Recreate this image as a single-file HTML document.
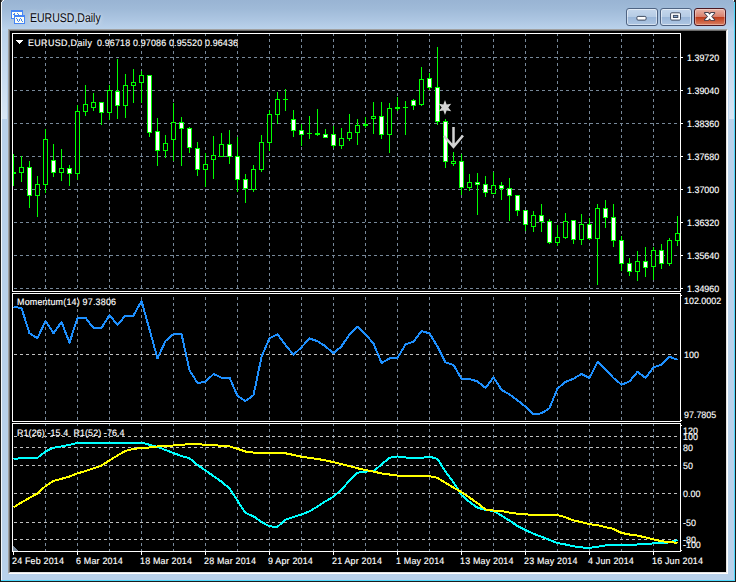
<!DOCTYPE html>
<html><head><meta charset="utf-8"><title>EURUSD,Daily</title>
<style>
html,body{margin:0;padding:0;}
body{width:738px;height:582px;overflow:hidden;background:#fff;font-family:"Liberation Sans",sans-serif;position:relative;}
#win{position:absolute;left:0;top:0;width:736px;height:582px;background:#b9d1ea;overflow:hidden;}
#cap{position:absolute;left:0;top:0;width:736px;height:31px;background:linear-gradient(#99b4d3 0px,#9fbad8 9px,#adc6e2 20px,#bbd3ec 30px);}
#bl{position:absolute;left:0;top:0;width:1px;height:582px;background:#1c1c1c;}
#bl2{position:absolute;left:1px;top:2px;width:1px;height:579px;background:#f4f8fc;}
#br{position:absolute;left:735px;top:0;width:1px;height:582px;background:#1c1c1c;}
#br2{position:absolute;left:734px;top:2px;width:1px;height:578px;background:#4fd8fc;}
#bb{position:absolute;left:0;top:581px;width:736px;height:1px;background:#1c1c1c;}
#bb2{position:absolute;left:1px;top:580px;width:734px;height:1px;background:#4fd8fc;}
#client{position:absolute;left:8px;top:29px;width:720px;height:545px;background:#000;box-sizing:border-box;border-top:1px solid #a0a0a0;border-left:1px solid #a0a0a0;border-right:1px solid #fff;border-bottom:1px solid #fff;}
#client2{position:absolute;left:9px;top:30px;width:718px;height:543px;background:#000;box-sizing:border-box;border-top:1px solid #696969;border-left:1px solid #696969;border-right:1px solid #e3e3e3;border-bottom:1px solid #e3e3e3;}
.hl{position:absolute;top:26px;height:93px;width:5px;background:linear-gradient(rgba(255,255,255,0),rgba(255,255,255,.44));}
svg{position:absolute;left:0;top:0;}
.l{position:absolute;color:#fff;font-size:9.4px;line-height:11px;white-space:pre;letter-spacing:.1px;text-rendering:geometricPrecision;transform:scaleX(.95);-webkit-text-stroke:.15px #fff;transform-origin:0 50%;}
#title{position:absolute;left:30.3px;top:9.6px;font-size:12.6px;line-height:16px;color:#0a0a10;white-space:pre;text-rendering:geometricPrecision;transform:scaleX(.835);transform-origin:0 0;text-shadow:0 0 3px rgba(255,255,255,.6),0 0 6px rgba(255,255,255,.5),0 0 10px rgba(255,255,255,.4);}
.btn{position:absolute;top:8px;height:18px;width:32px;box-sizing:border-box;border:1px solid #4f6483;border-radius:3px;box-shadow:inset 0 0 0 1px rgba(255,255,255,.5);background:linear-gradient(#c5d7ec 0,#b6cce5 47%,#9bb7d9 53%,#afc7e3 100%);}
#bc{width:32px;border-color:#4a1822;background:linear-gradient(#e9b3a6 0,#d9826f 47%,#bf3d1c 53%,#d97f62 100%);box-shadow:inset 0 0 0 1px rgba(255,255,255,.35);}
</style></head><body>
<div id="win">
<div id="cap"></div>
<div class="hl" style="left:2px"></div><div class="hl" style="left:729px"></div>
<div id="bl"></div><div id="bl2"></div><div id="br2"></div><div id="br"></div><div id="bb2"></div><div id="bb"></div>
<div id="title">EURUSD,Daily</div>
<div class="btn" style="left:626px"></div>
<div class="btn" style="left:660px"></div>
<div class="btn" id="bc" style="left:694px"></div>
<svg width="738" height="31" viewBox="0 0 738 31" shape-rendering="crispEdges">
<path d="M1 0h1v2h-1z" fill="#4a4a4a"/><path d="M2 0h1v1h-1z" fill="#8f99a6"/><path d="M2 1h1v1h-1zM3 0h1v1h-1zM733 0h1v1h-1z" fill="#f0f6fb"/><path d="M734 0h1v2h-1z" fill="#2a2a2a"/>
<rect x="11" y="10" width="12" height="9" fill="#4685f5"/>
<rect x="12" y="12" width="10" height="6" fill="#fffff2"/>
<path d="M13 14h2v1h-2zM14 13h1v1h-1zM17 13h1v1h-1zM18 14h1v1h-1z" fill="#4685f5"/>
<rect x="14" y="15" width="11" height="9" fill="#4685f5"/>
<rect x="15" y="17" width="9" height="6" fill="#fffff2"/>
<path d="M16 18h1v1h-1zM17 19h1v1h-1zM17 20h1v1h-1zM18 21h1v1h-1zM19 20h1v1h-1zM19 19h1v1h-1zM20 18h1v1h-1zM21 19h1v1h-1zM21 20h1v1h-1zM22 21h1v1h-1z" fill="#4685f5"/>
<g shape-rendering="geometricPrecision">
<rect x="636.9" y="16.4" width="9.2" height="3.7" rx="1.2" fill="#fff" stroke="#3f4b60" stroke-width="1"/>
<rect x="670.6" y="12.8" width="9.9" height="7.3" rx="1.2" fill="#fff" stroke="#3f4b60" stroke-width="1"/>
<rect x="673.4" y="15.4" width="4.4" height="2.1" fill="#86a5cc" stroke="#3f4b60" stroke-width="1"/>
<path d="M704.9 12.9H708.1L714.3 19.9H711.1ZM711.1 12.9H714.3L708.1 19.9H704.9Z" fill="#43414f" stroke="#43414f" stroke-width="1.9" stroke-linejoin="round"/>
<path d="M704.9 12.9H708.1L714.3 19.9H711.1ZM711.1 12.9H714.3L708.1 19.9H704.9Z" fill="#fff"/>
</g>
</svg>
<div id="client"></div><div id="client2"></div>
<svg width="738" height="582" viewBox="0 0 738 582" shape-rendering="crispEdges">
<defs>
<clipPath id="cm"><rect x="13" y="34" width="667" height="257"/></clipPath>
<clipPath id="c2"><rect x="13" y="294" width="667" height="127"/></clipPath>
<clipPath id="c3"><rect x="13" y="424" width="667" height="127"/></clipPath>
</defs>
<path d="M45 34h1v2h-1zM45 39h1v3h-1zM45 45h1v3h-1zM45 51h1v3h-1zM45 57h1v3h-1zM45 63h1v3h-1zM45 69h1v3h-1zM45 75h1v3h-1zM45 81h1v3h-1zM45 87h1v3h-1zM45 93h1v3h-1zM45 99h1v3h-1zM45 105h1v3h-1zM45 111h1v3h-1zM45 117h1v3h-1zM45 123h1v3h-1zM45 129h1v3h-1zM45 135h1v3h-1zM45 141h1v3h-1zM45 147h1v3h-1zM45 153h1v3h-1zM45 159h1v3h-1zM45 165h1v3h-1zM45 171h1v3h-1zM45 177h1v3h-1zM45 183h1v3h-1zM45 189h1v3h-1zM45 195h1v3h-1zM45 201h1v3h-1zM45 207h1v3h-1zM45 213h1v3h-1zM45 219h1v3h-1zM45 225h1v3h-1zM45 231h1v3h-1zM45 237h1v3h-1zM45 243h1v3h-1zM45 249h1v3h-1zM45 255h1v3h-1zM45 261h1v3h-1zM45 267h1v3h-1zM45 273h1v3h-1zM45 279h1v3h-1zM45 285h1v3h-1zM45 297h1v3h-1zM45 303h1v3h-1zM45 309h1v3h-1zM45 315h1v3h-1zM45 321h1v3h-1zM45 327h1v3h-1zM45 333h1v3h-1zM45 339h1v3h-1zM45 345h1v3h-1zM45 351h1v3h-1zM45 357h1v3h-1zM45 363h1v3h-1zM45 369h1v3h-1zM45 375h1v3h-1zM45 381h1v3h-1zM45 387h1v3h-1zM45 393h1v3h-1zM45 399h1v3h-1zM45 405h1v3h-1zM45 411h1v3h-1zM45 417h1v3h-1zM45 424h1v2h-1zM45 429h1v3h-1zM45 435h1v3h-1zM45 441h1v3h-1zM45 447h1v3h-1zM45 453h1v3h-1zM45 459h1v3h-1zM45 465h1v3h-1zM45 471h1v3h-1zM45 477h1v3h-1zM45 483h1v3h-1zM45 489h1v3h-1zM45 495h1v3h-1zM45 501h1v3h-1zM45 507h1v3h-1zM45 513h1v3h-1zM45 519h1v3h-1zM45 525h1v3h-1zM45 531h1v3h-1zM45 537h1v3h-1zM45 543h1v3h-1zM45 549h1v2h-1zM77 34h1v2h-1zM77 39h1v3h-1zM77 45h1v3h-1zM77 51h1v3h-1zM77 57h1v3h-1zM77 63h1v3h-1zM77 69h1v3h-1zM77 75h1v3h-1zM77 81h1v3h-1zM77 87h1v3h-1zM77 93h1v3h-1zM77 99h1v3h-1zM77 105h1v3h-1zM77 111h1v3h-1zM77 117h1v3h-1zM77 123h1v3h-1zM77 129h1v3h-1zM77 135h1v3h-1zM77 141h1v3h-1zM77 147h1v3h-1zM77 153h1v3h-1zM77 159h1v3h-1zM77 165h1v3h-1zM77 171h1v3h-1zM77 177h1v3h-1zM77 183h1v3h-1zM77 189h1v3h-1zM77 195h1v3h-1zM77 201h1v3h-1zM77 207h1v3h-1zM77 213h1v3h-1zM77 219h1v3h-1zM77 225h1v3h-1zM77 231h1v3h-1zM77 237h1v3h-1zM77 243h1v3h-1zM77 249h1v3h-1zM77 255h1v3h-1zM77 261h1v3h-1zM77 267h1v3h-1zM77 273h1v3h-1zM77 279h1v3h-1zM77 285h1v3h-1zM77 297h1v3h-1zM77 303h1v3h-1zM77 309h1v3h-1zM77 315h1v3h-1zM77 321h1v3h-1zM77 327h1v3h-1zM77 333h1v3h-1zM77 339h1v3h-1zM77 345h1v3h-1zM77 351h1v3h-1zM77 357h1v3h-1zM77 363h1v3h-1zM77 369h1v3h-1zM77 375h1v3h-1zM77 381h1v3h-1zM77 387h1v3h-1zM77 393h1v3h-1zM77 399h1v3h-1zM77 405h1v3h-1zM77 411h1v3h-1zM77 417h1v3h-1zM77 424h1v2h-1zM77 429h1v3h-1zM77 435h1v3h-1zM77 441h1v3h-1zM77 447h1v3h-1zM77 453h1v3h-1zM77 459h1v3h-1zM77 465h1v3h-1zM77 471h1v3h-1zM77 477h1v3h-1zM77 483h1v3h-1zM77 489h1v3h-1zM77 495h1v3h-1zM77 501h1v3h-1zM77 507h1v3h-1zM77 513h1v3h-1zM77 519h1v3h-1zM77 525h1v3h-1zM77 531h1v3h-1zM77 537h1v3h-1zM77 543h1v3h-1zM77 549h1v2h-1zM109 34h1v2h-1zM109 39h1v3h-1zM109 45h1v3h-1zM109 51h1v3h-1zM109 57h1v3h-1zM109 63h1v3h-1zM109 69h1v3h-1zM109 75h1v3h-1zM109 81h1v3h-1zM109 87h1v3h-1zM109 93h1v3h-1zM109 99h1v3h-1zM109 105h1v3h-1zM109 111h1v3h-1zM109 117h1v3h-1zM109 123h1v3h-1zM109 129h1v3h-1zM109 135h1v3h-1zM109 141h1v3h-1zM109 147h1v3h-1zM109 153h1v3h-1zM109 159h1v3h-1zM109 165h1v3h-1zM109 171h1v3h-1zM109 177h1v3h-1zM109 183h1v3h-1zM109 189h1v3h-1zM109 195h1v3h-1zM109 201h1v3h-1zM109 207h1v3h-1zM109 213h1v3h-1zM109 219h1v3h-1zM109 225h1v3h-1zM109 231h1v3h-1zM109 237h1v3h-1zM109 243h1v3h-1zM109 249h1v3h-1zM109 255h1v3h-1zM109 261h1v3h-1zM109 267h1v3h-1zM109 273h1v3h-1zM109 279h1v3h-1zM109 285h1v3h-1zM109 297h1v3h-1zM109 303h1v3h-1zM109 309h1v3h-1zM109 315h1v3h-1zM109 321h1v3h-1zM109 327h1v3h-1zM109 333h1v3h-1zM109 339h1v3h-1zM109 345h1v3h-1zM109 351h1v3h-1zM109 357h1v3h-1zM109 363h1v3h-1zM109 369h1v3h-1zM109 375h1v3h-1zM109 381h1v3h-1zM109 387h1v3h-1zM109 393h1v3h-1zM109 399h1v3h-1zM109 405h1v3h-1zM109 411h1v3h-1zM109 417h1v3h-1zM109 424h1v2h-1zM109 429h1v3h-1zM109 435h1v3h-1zM109 441h1v3h-1zM109 447h1v3h-1zM109 453h1v3h-1zM109 459h1v3h-1zM109 465h1v3h-1zM109 471h1v3h-1zM109 477h1v3h-1zM109 483h1v3h-1zM109 489h1v3h-1zM109 495h1v3h-1zM109 501h1v3h-1zM109 507h1v3h-1zM109 513h1v3h-1zM109 519h1v3h-1zM109 525h1v3h-1zM109 531h1v3h-1zM109 537h1v3h-1zM109 543h1v3h-1zM109 549h1v2h-1zM141 34h1v2h-1zM141 39h1v3h-1zM141 45h1v3h-1zM141 51h1v3h-1zM141 57h1v3h-1zM141 63h1v3h-1zM141 69h1v3h-1zM141 75h1v3h-1zM141 81h1v3h-1zM141 87h1v3h-1zM141 93h1v3h-1zM141 99h1v3h-1zM141 105h1v3h-1zM141 111h1v3h-1zM141 117h1v3h-1zM141 123h1v3h-1zM141 129h1v3h-1zM141 135h1v3h-1zM141 141h1v3h-1zM141 147h1v3h-1zM141 153h1v3h-1zM141 159h1v3h-1zM141 165h1v3h-1zM141 171h1v3h-1zM141 177h1v3h-1zM141 183h1v3h-1zM141 189h1v3h-1zM141 195h1v3h-1zM141 201h1v3h-1zM141 207h1v3h-1zM141 213h1v3h-1zM141 219h1v3h-1zM141 225h1v3h-1zM141 231h1v3h-1zM141 237h1v3h-1zM141 243h1v3h-1zM141 249h1v3h-1zM141 255h1v3h-1zM141 261h1v3h-1zM141 267h1v3h-1zM141 273h1v3h-1zM141 279h1v3h-1zM141 285h1v3h-1zM141 297h1v3h-1zM141 303h1v3h-1zM141 309h1v3h-1zM141 315h1v3h-1zM141 321h1v3h-1zM141 327h1v3h-1zM141 333h1v3h-1zM141 339h1v3h-1zM141 345h1v3h-1zM141 351h1v3h-1zM141 357h1v3h-1zM141 363h1v3h-1zM141 369h1v3h-1zM141 375h1v3h-1zM141 381h1v3h-1zM141 387h1v3h-1zM141 393h1v3h-1zM141 399h1v3h-1zM141 405h1v3h-1zM141 411h1v3h-1zM141 417h1v3h-1zM141 424h1v2h-1zM141 429h1v3h-1zM141 435h1v3h-1zM141 441h1v3h-1zM141 447h1v3h-1zM141 453h1v3h-1zM141 459h1v3h-1zM141 465h1v3h-1zM141 471h1v3h-1zM141 477h1v3h-1zM141 483h1v3h-1zM141 489h1v3h-1zM141 495h1v3h-1zM141 501h1v3h-1zM141 507h1v3h-1zM141 513h1v3h-1zM141 519h1v3h-1zM141 525h1v3h-1zM141 531h1v3h-1zM141 537h1v3h-1zM141 543h1v3h-1zM141 549h1v2h-1zM173 34h1v2h-1zM173 39h1v3h-1zM173 45h1v3h-1zM173 51h1v3h-1zM173 57h1v3h-1zM173 63h1v3h-1zM173 69h1v3h-1zM173 75h1v3h-1zM173 81h1v3h-1zM173 87h1v3h-1zM173 93h1v3h-1zM173 99h1v3h-1zM173 105h1v3h-1zM173 111h1v3h-1zM173 117h1v3h-1zM173 123h1v3h-1zM173 129h1v3h-1zM173 135h1v3h-1zM173 141h1v3h-1zM173 147h1v3h-1zM173 153h1v3h-1zM173 159h1v3h-1zM173 165h1v3h-1zM173 171h1v3h-1zM173 177h1v3h-1zM173 183h1v3h-1zM173 189h1v3h-1zM173 195h1v3h-1zM173 201h1v3h-1zM173 207h1v3h-1zM173 213h1v3h-1zM173 219h1v3h-1zM173 225h1v3h-1zM173 231h1v3h-1zM173 237h1v3h-1zM173 243h1v3h-1zM173 249h1v3h-1zM173 255h1v3h-1zM173 261h1v3h-1zM173 267h1v3h-1zM173 273h1v3h-1zM173 279h1v3h-1zM173 285h1v3h-1zM173 297h1v3h-1zM173 303h1v3h-1zM173 309h1v3h-1zM173 315h1v3h-1zM173 321h1v3h-1zM173 327h1v3h-1zM173 333h1v3h-1zM173 339h1v3h-1zM173 345h1v3h-1zM173 351h1v3h-1zM173 357h1v3h-1zM173 363h1v3h-1zM173 369h1v3h-1zM173 375h1v3h-1zM173 381h1v3h-1zM173 387h1v3h-1zM173 393h1v3h-1zM173 399h1v3h-1zM173 405h1v3h-1zM173 411h1v3h-1zM173 417h1v3h-1zM173 424h1v2h-1zM173 429h1v3h-1zM173 435h1v3h-1zM173 441h1v3h-1zM173 447h1v3h-1zM173 453h1v3h-1zM173 459h1v3h-1zM173 465h1v3h-1zM173 471h1v3h-1zM173 477h1v3h-1zM173 483h1v3h-1zM173 489h1v3h-1zM173 495h1v3h-1zM173 501h1v3h-1zM173 507h1v3h-1zM173 513h1v3h-1zM173 519h1v3h-1zM173 525h1v3h-1zM173 531h1v3h-1zM173 537h1v3h-1zM173 543h1v3h-1zM173 549h1v2h-1zM205 34h1v2h-1zM205 39h1v3h-1zM205 45h1v3h-1zM205 51h1v3h-1zM205 57h1v3h-1zM205 63h1v3h-1zM205 69h1v3h-1zM205 75h1v3h-1zM205 81h1v3h-1zM205 87h1v3h-1zM205 93h1v3h-1zM205 99h1v3h-1zM205 105h1v3h-1zM205 111h1v3h-1zM205 117h1v3h-1zM205 123h1v3h-1zM205 129h1v3h-1zM205 135h1v3h-1zM205 141h1v3h-1zM205 147h1v3h-1zM205 153h1v3h-1zM205 159h1v3h-1zM205 165h1v3h-1zM205 171h1v3h-1zM205 177h1v3h-1zM205 183h1v3h-1zM205 189h1v3h-1zM205 195h1v3h-1zM205 201h1v3h-1zM205 207h1v3h-1zM205 213h1v3h-1zM205 219h1v3h-1zM205 225h1v3h-1zM205 231h1v3h-1zM205 237h1v3h-1zM205 243h1v3h-1zM205 249h1v3h-1zM205 255h1v3h-1zM205 261h1v3h-1zM205 267h1v3h-1zM205 273h1v3h-1zM205 279h1v3h-1zM205 285h1v3h-1zM205 297h1v3h-1zM205 303h1v3h-1zM205 309h1v3h-1zM205 315h1v3h-1zM205 321h1v3h-1zM205 327h1v3h-1zM205 333h1v3h-1zM205 339h1v3h-1zM205 345h1v3h-1zM205 351h1v3h-1zM205 357h1v3h-1zM205 363h1v3h-1zM205 369h1v3h-1zM205 375h1v3h-1zM205 381h1v3h-1zM205 387h1v3h-1zM205 393h1v3h-1zM205 399h1v3h-1zM205 405h1v3h-1zM205 411h1v3h-1zM205 417h1v3h-1zM205 424h1v2h-1zM205 429h1v3h-1zM205 435h1v3h-1zM205 441h1v3h-1zM205 447h1v3h-1zM205 453h1v3h-1zM205 459h1v3h-1zM205 465h1v3h-1zM205 471h1v3h-1zM205 477h1v3h-1zM205 483h1v3h-1zM205 489h1v3h-1zM205 495h1v3h-1zM205 501h1v3h-1zM205 507h1v3h-1zM205 513h1v3h-1zM205 519h1v3h-1zM205 525h1v3h-1zM205 531h1v3h-1zM205 537h1v3h-1zM205 543h1v3h-1zM205 549h1v2h-1zM237 34h1v2h-1zM237 39h1v3h-1zM237 45h1v3h-1zM237 51h1v3h-1zM237 57h1v3h-1zM237 63h1v3h-1zM237 69h1v3h-1zM237 75h1v3h-1zM237 81h1v3h-1zM237 87h1v3h-1zM237 93h1v3h-1zM237 99h1v3h-1zM237 105h1v3h-1zM237 111h1v3h-1zM237 117h1v3h-1zM237 123h1v3h-1zM237 129h1v3h-1zM237 135h1v3h-1zM237 141h1v3h-1zM237 147h1v3h-1zM237 153h1v3h-1zM237 159h1v3h-1zM237 165h1v3h-1zM237 171h1v3h-1zM237 177h1v3h-1zM237 183h1v3h-1zM237 189h1v3h-1zM237 195h1v3h-1zM237 201h1v3h-1zM237 207h1v3h-1zM237 213h1v3h-1zM237 219h1v3h-1zM237 225h1v3h-1zM237 231h1v3h-1zM237 237h1v3h-1zM237 243h1v3h-1zM237 249h1v3h-1zM237 255h1v3h-1zM237 261h1v3h-1zM237 267h1v3h-1zM237 273h1v3h-1zM237 279h1v3h-1zM237 285h1v3h-1zM237 297h1v3h-1zM237 303h1v3h-1zM237 309h1v3h-1zM237 315h1v3h-1zM237 321h1v3h-1zM237 327h1v3h-1zM237 333h1v3h-1zM237 339h1v3h-1zM237 345h1v3h-1zM237 351h1v3h-1zM237 357h1v3h-1zM237 363h1v3h-1zM237 369h1v3h-1zM237 375h1v3h-1zM237 381h1v3h-1zM237 387h1v3h-1zM237 393h1v3h-1zM237 399h1v3h-1zM237 405h1v3h-1zM237 411h1v3h-1zM237 417h1v3h-1zM237 424h1v2h-1zM237 429h1v3h-1zM237 435h1v3h-1zM237 441h1v3h-1zM237 447h1v3h-1zM237 453h1v3h-1zM237 459h1v3h-1zM237 465h1v3h-1zM237 471h1v3h-1zM237 477h1v3h-1zM237 483h1v3h-1zM237 489h1v3h-1zM237 495h1v3h-1zM237 501h1v3h-1zM237 507h1v3h-1zM237 513h1v3h-1zM237 519h1v3h-1zM237 525h1v3h-1zM237 531h1v3h-1zM237 537h1v3h-1zM237 543h1v3h-1zM237 549h1v2h-1zM269 34h1v2h-1zM269 39h1v3h-1zM269 45h1v3h-1zM269 51h1v3h-1zM269 57h1v3h-1zM269 63h1v3h-1zM269 69h1v3h-1zM269 75h1v3h-1zM269 81h1v3h-1zM269 87h1v3h-1zM269 93h1v3h-1zM269 99h1v3h-1zM269 105h1v3h-1zM269 111h1v3h-1zM269 117h1v3h-1zM269 123h1v3h-1zM269 129h1v3h-1zM269 135h1v3h-1zM269 141h1v3h-1zM269 147h1v3h-1zM269 153h1v3h-1zM269 159h1v3h-1zM269 165h1v3h-1zM269 171h1v3h-1zM269 177h1v3h-1zM269 183h1v3h-1zM269 189h1v3h-1zM269 195h1v3h-1zM269 201h1v3h-1zM269 207h1v3h-1zM269 213h1v3h-1zM269 219h1v3h-1zM269 225h1v3h-1zM269 231h1v3h-1zM269 237h1v3h-1zM269 243h1v3h-1zM269 249h1v3h-1zM269 255h1v3h-1zM269 261h1v3h-1zM269 267h1v3h-1zM269 273h1v3h-1zM269 279h1v3h-1zM269 285h1v3h-1zM269 297h1v3h-1zM269 303h1v3h-1zM269 309h1v3h-1zM269 315h1v3h-1zM269 321h1v3h-1zM269 327h1v3h-1zM269 333h1v3h-1zM269 339h1v3h-1zM269 345h1v3h-1zM269 351h1v3h-1zM269 357h1v3h-1zM269 363h1v3h-1zM269 369h1v3h-1zM269 375h1v3h-1zM269 381h1v3h-1zM269 387h1v3h-1zM269 393h1v3h-1zM269 399h1v3h-1zM269 405h1v3h-1zM269 411h1v3h-1zM269 417h1v3h-1zM269 424h1v2h-1zM269 429h1v3h-1zM269 435h1v3h-1zM269 441h1v3h-1zM269 447h1v3h-1zM269 453h1v3h-1zM269 459h1v3h-1zM269 465h1v3h-1zM269 471h1v3h-1zM269 477h1v3h-1zM269 483h1v3h-1zM269 489h1v3h-1zM269 495h1v3h-1zM269 501h1v3h-1zM269 507h1v3h-1zM269 513h1v3h-1zM269 519h1v3h-1zM269 525h1v3h-1zM269 531h1v3h-1zM269 537h1v3h-1zM269 543h1v3h-1zM269 549h1v2h-1zM301 34h1v2h-1zM301 39h1v3h-1zM301 45h1v3h-1zM301 51h1v3h-1zM301 57h1v3h-1zM301 63h1v3h-1zM301 69h1v3h-1zM301 75h1v3h-1zM301 81h1v3h-1zM301 87h1v3h-1zM301 93h1v3h-1zM301 99h1v3h-1zM301 105h1v3h-1zM301 111h1v3h-1zM301 117h1v3h-1zM301 123h1v3h-1zM301 129h1v3h-1zM301 135h1v3h-1zM301 141h1v3h-1zM301 147h1v3h-1zM301 153h1v3h-1zM301 159h1v3h-1zM301 165h1v3h-1zM301 171h1v3h-1zM301 177h1v3h-1zM301 183h1v3h-1zM301 189h1v3h-1zM301 195h1v3h-1zM301 201h1v3h-1zM301 207h1v3h-1zM301 213h1v3h-1zM301 219h1v3h-1zM301 225h1v3h-1zM301 231h1v3h-1zM301 237h1v3h-1zM301 243h1v3h-1zM301 249h1v3h-1zM301 255h1v3h-1zM301 261h1v3h-1zM301 267h1v3h-1zM301 273h1v3h-1zM301 279h1v3h-1zM301 285h1v3h-1zM301 297h1v3h-1zM301 303h1v3h-1zM301 309h1v3h-1zM301 315h1v3h-1zM301 321h1v3h-1zM301 327h1v3h-1zM301 333h1v3h-1zM301 339h1v3h-1zM301 345h1v3h-1zM301 351h1v3h-1zM301 357h1v3h-1zM301 363h1v3h-1zM301 369h1v3h-1zM301 375h1v3h-1zM301 381h1v3h-1zM301 387h1v3h-1zM301 393h1v3h-1zM301 399h1v3h-1zM301 405h1v3h-1zM301 411h1v3h-1zM301 417h1v3h-1zM301 424h1v2h-1zM301 429h1v3h-1zM301 435h1v3h-1zM301 441h1v3h-1zM301 447h1v3h-1zM301 453h1v3h-1zM301 459h1v3h-1zM301 465h1v3h-1zM301 471h1v3h-1zM301 477h1v3h-1zM301 483h1v3h-1zM301 489h1v3h-1zM301 495h1v3h-1zM301 501h1v3h-1zM301 507h1v3h-1zM301 513h1v3h-1zM301 519h1v3h-1zM301 525h1v3h-1zM301 531h1v3h-1zM301 537h1v3h-1zM301 543h1v3h-1zM301 549h1v2h-1zM333 34h1v2h-1zM333 39h1v3h-1zM333 45h1v3h-1zM333 51h1v3h-1zM333 57h1v3h-1zM333 63h1v3h-1zM333 69h1v3h-1zM333 75h1v3h-1zM333 81h1v3h-1zM333 87h1v3h-1zM333 93h1v3h-1zM333 99h1v3h-1zM333 105h1v3h-1zM333 111h1v3h-1zM333 117h1v3h-1zM333 123h1v3h-1zM333 129h1v3h-1zM333 135h1v3h-1zM333 141h1v3h-1zM333 147h1v3h-1zM333 153h1v3h-1zM333 159h1v3h-1zM333 165h1v3h-1zM333 171h1v3h-1zM333 177h1v3h-1zM333 183h1v3h-1zM333 189h1v3h-1zM333 195h1v3h-1zM333 201h1v3h-1zM333 207h1v3h-1zM333 213h1v3h-1zM333 219h1v3h-1zM333 225h1v3h-1zM333 231h1v3h-1zM333 237h1v3h-1zM333 243h1v3h-1zM333 249h1v3h-1zM333 255h1v3h-1zM333 261h1v3h-1zM333 267h1v3h-1zM333 273h1v3h-1zM333 279h1v3h-1zM333 285h1v3h-1zM333 297h1v3h-1zM333 303h1v3h-1zM333 309h1v3h-1zM333 315h1v3h-1zM333 321h1v3h-1zM333 327h1v3h-1zM333 333h1v3h-1zM333 339h1v3h-1zM333 345h1v3h-1zM333 351h1v3h-1zM333 357h1v3h-1zM333 363h1v3h-1zM333 369h1v3h-1zM333 375h1v3h-1zM333 381h1v3h-1zM333 387h1v3h-1zM333 393h1v3h-1zM333 399h1v3h-1zM333 405h1v3h-1zM333 411h1v3h-1zM333 417h1v3h-1zM333 424h1v2h-1zM333 429h1v3h-1zM333 435h1v3h-1zM333 441h1v3h-1zM333 447h1v3h-1zM333 453h1v3h-1zM333 459h1v3h-1zM333 465h1v3h-1zM333 471h1v3h-1zM333 477h1v3h-1zM333 483h1v3h-1zM333 489h1v3h-1zM333 495h1v3h-1zM333 501h1v3h-1zM333 507h1v3h-1zM333 513h1v3h-1zM333 519h1v3h-1zM333 525h1v3h-1zM333 531h1v3h-1zM333 537h1v3h-1zM333 543h1v3h-1zM333 549h1v2h-1zM365 34h1v2h-1zM365 39h1v3h-1zM365 45h1v3h-1zM365 51h1v3h-1zM365 57h1v3h-1zM365 63h1v3h-1zM365 69h1v3h-1zM365 75h1v3h-1zM365 81h1v3h-1zM365 87h1v3h-1zM365 93h1v3h-1zM365 99h1v3h-1zM365 105h1v3h-1zM365 111h1v3h-1zM365 117h1v3h-1zM365 123h1v3h-1zM365 129h1v3h-1zM365 135h1v3h-1zM365 141h1v3h-1zM365 147h1v3h-1zM365 153h1v3h-1zM365 159h1v3h-1zM365 165h1v3h-1zM365 171h1v3h-1zM365 177h1v3h-1zM365 183h1v3h-1zM365 189h1v3h-1zM365 195h1v3h-1zM365 201h1v3h-1zM365 207h1v3h-1zM365 213h1v3h-1zM365 219h1v3h-1zM365 225h1v3h-1zM365 231h1v3h-1zM365 237h1v3h-1zM365 243h1v3h-1zM365 249h1v3h-1zM365 255h1v3h-1zM365 261h1v3h-1zM365 267h1v3h-1zM365 273h1v3h-1zM365 279h1v3h-1zM365 285h1v3h-1zM365 297h1v3h-1zM365 303h1v3h-1zM365 309h1v3h-1zM365 315h1v3h-1zM365 321h1v3h-1zM365 327h1v3h-1zM365 333h1v3h-1zM365 339h1v3h-1zM365 345h1v3h-1zM365 351h1v3h-1zM365 357h1v3h-1zM365 363h1v3h-1zM365 369h1v3h-1zM365 375h1v3h-1zM365 381h1v3h-1zM365 387h1v3h-1zM365 393h1v3h-1zM365 399h1v3h-1zM365 405h1v3h-1zM365 411h1v3h-1zM365 417h1v3h-1zM365 424h1v2h-1zM365 429h1v3h-1zM365 435h1v3h-1zM365 441h1v3h-1zM365 447h1v3h-1zM365 453h1v3h-1zM365 459h1v3h-1zM365 465h1v3h-1zM365 471h1v3h-1zM365 477h1v3h-1zM365 483h1v3h-1zM365 489h1v3h-1zM365 495h1v3h-1zM365 501h1v3h-1zM365 507h1v3h-1zM365 513h1v3h-1zM365 519h1v3h-1zM365 525h1v3h-1zM365 531h1v3h-1zM365 537h1v3h-1zM365 543h1v3h-1zM365 549h1v2h-1zM397 34h1v2h-1zM397 39h1v3h-1zM397 45h1v3h-1zM397 51h1v3h-1zM397 57h1v3h-1zM397 63h1v3h-1zM397 69h1v3h-1zM397 75h1v3h-1zM397 81h1v3h-1zM397 87h1v3h-1zM397 93h1v3h-1zM397 99h1v3h-1zM397 105h1v3h-1zM397 111h1v3h-1zM397 117h1v3h-1zM397 123h1v3h-1zM397 129h1v3h-1zM397 135h1v3h-1zM397 141h1v3h-1zM397 147h1v3h-1zM397 153h1v3h-1zM397 159h1v3h-1zM397 165h1v3h-1zM397 171h1v3h-1zM397 177h1v3h-1zM397 183h1v3h-1zM397 189h1v3h-1zM397 195h1v3h-1zM397 201h1v3h-1zM397 207h1v3h-1zM397 213h1v3h-1zM397 219h1v3h-1zM397 225h1v3h-1zM397 231h1v3h-1zM397 237h1v3h-1zM397 243h1v3h-1zM397 249h1v3h-1zM397 255h1v3h-1zM397 261h1v3h-1zM397 267h1v3h-1zM397 273h1v3h-1zM397 279h1v3h-1zM397 285h1v3h-1zM397 297h1v3h-1zM397 303h1v3h-1zM397 309h1v3h-1zM397 315h1v3h-1zM397 321h1v3h-1zM397 327h1v3h-1zM397 333h1v3h-1zM397 339h1v3h-1zM397 345h1v3h-1zM397 351h1v3h-1zM397 357h1v3h-1zM397 363h1v3h-1zM397 369h1v3h-1zM397 375h1v3h-1zM397 381h1v3h-1zM397 387h1v3h-1zM397 393h1v3h-1zM397 399h1v3h-1zM397 405h1v3h-1zM397 411h1v3h-1zM397 417h1v3h-1zM397 424h1v2h-1zM397 429h1v3h-1zM397 435h1v3h-1zM397 441h1v3h-1zM397 447h1v3h-1zM397 453h1v3h-1zM397 459h1v3h-1zM397 465h1v3h-1zM397 471h1v3h-1zM397 477h1v3h-1zM397 483h1v3h-1zM397 489h1v3h-1zM397 495h1v3h-1zM397 501h1v3h-1zM397 507h1v3h-1zM397 513h1v3h-1zM397 519h1v3h-1zM397 525h1v3h-1zM397 531h1v3h-1zM397 537h1v3h-1zM397 543h1v3h-1zM397 549h1v2h-1zM429 34h1v2h-1zM429 39h1v3h-1zM429 45h1v3h-1zM429 51h1v3h-1zM429 57h1v3h-1zM429 63h1v3h-1zM429 69h1v3h-1zM429 75h1v3h-1zM429 81h1v3h-1zM429 87h1v3h-1zM429 93h1v3h-1zM429 99h1v3h-1zM429 105h1v3h-1zM429 111h1v3h-1zM429 117h1v3h-1zM429 123h1v3h-1zM429 129h1v3h-1zM429 135h1v3h-1zM429 141h1v3h-1zM429 147h1v3h-1zM429 153h1v3h-1zM429 159h1v3h-1zM429 165h1v3h-1zM429 171h1v3h-1zM429 177h1v3h-1zM429 183h1v3h-1zM429 189h1v3h-1zM429 195h1v3h-1zM429 201h1v3h-1zM429 207h1v3h-1zM429 213h1v3h-1zM429 219h1v3h-1zM429 225h1v3h-1zM429 231h1v3h-1zM429 237h1v3h-1zM429 243h1v3h-1zM429 249h1v3h-1zM429 255h1v3h-1zM429 261h1v3h-1zM429 267h1v3h-1zM429 273h1v3h-1zM429 279h1v3h-1zM429 285h1v3h-1zM429 297h1v3h-1zM429 303h1v3h-1zM429 309h1v3h-1zM429 315h1v3h-1zM429 321h1v3h-1zM429 327h1v3h-1zM429 333h1v3h-1zM429 339h1v3h-1zM429 345h1v3h-1zM429 351h1v3h-1zM429 357h1v3h-1zM429 363h1v3h-1zM429 369h1v3h-1zM429 375h1v3h-1zM429 381h1v3h-1zM429 387h1v3h-1zM429 393h1v3h-1zM429 399h1v3h-1zM429 405h1v3h-1zM429 411h1v3h-1zM429 417h1v3h-1zM429 424h1v2h-1zM429 429h1v3h-1zM429 435h1v3h-1zM429 441h1v3h-1zM429 447h1v3h-1zM429 453h1v3h-1zM429 459h1v3h-1zM429 465h1v3h-1zM429 471h1v3h-1zM429 477h1v3h-1zM429 483h1v3h-1zM429 489h1v3h-1zM429 495h1v3h-1zM429 501h1v3h-1zM429 507h1v3h-1zM429 513h1v3h-1zM429 519h1v3h-1zM429 525h1v3h-1zM429 531h1v3h-1zM429 537h1v3h-1zM429 543h1v3h-1zM429 549h1v2h-1zM461 34h1v2h-1zM461 39h1v3h-1zM461 45h1v3h-1zM461 51h1v3h-1zM461 57h1v3h-1zM461 63h1v3h-1zM461 69h1v3h-1zM461 75h1v3h-1zM461 81h1v3h-1zM461 87h1v3h-1zM461 93h1v3h-1zM461 99h1v3h-1zM461 105h1v3h-1zM461 111h1v3h-1zM461 117h1v3h-1zM461 123h1v3h-1zM461 129h1v3h-1zM461 135h1v3h-1zM461 141h1v3h-1zM461 147h1v3h-1zM461 153h1v3h-1zM461 159h1v3h-1zM461 165h1v3h-1zM461 171h1v3h-1zM461 177h1v3h-1zM461 183h1v3h-1zM461 189h1v3h-1zM461 195h1v3h-1zM461 201h1v3h-1zM461 207h1v3h-1zM461 213h1v3h-1zM461 219h1v3h-1zM461 225h1v3h-1zM461 231h1v3h-1zM461 237h1v3h-1zM461 243h1v3h-1zM461 249h1v3h-1zM461 255h1v3h-1zM461 261h1v3h-1zM461 267h1v3h-1zM461 273h1v3h-1zM461 279h1v3h-1zM461 285h1v3h-1zM461 297h1v3h-1zM461 303h1v3h-1zM461 309h1v3h-1zM461 315h1v3h-1zM461 321h1v3h-1zM461 327h1v3h-1zM461 333h1v3h-1zM461 339h1v3h-1zM461 345h1v3h-1zM461 351h1v3h-1zM461 357h1v3h-1zM461 363h1v3h-1zM461 369h1v3h-1zM461 375h1v3h-1zM461 381h1v3h-1zM461 387h1v3h-1zM461 393h1v3h-1zM461 399h1v3h-1zM461 405h1v3h-1zM461 411h1v3h-1zM461 417h1v3h-1zM461 424h1v2h-1zM461 429h1v3h-1zM461 435h1v3h-1zM461 441h1v3h-1zM461 447h1v3h-1zM461 453h1v3h-1zM461 459h1v3h-1zM461 465h1v3h-1zM461 471h1v3h-1zM461 477h1v3h-1zM461 483h1v3h-1zM461 489h1v3h-1zM461 495h1v3h-1zM461 501h1v3h-1zM461 507h1v3h-1zM461 513h1v3h-1zM461 519h1v3h-1zM461 525h1v3h-1zM461 531h1v3h-1zM461 537h1v3h-1zM461 543h1v3h-1zM461 549h1v2h-1zM493 34h1v2h-1zM493 39h1v3h-1zM493 45h1v3h-1zM493 51h1v3h-1zM493 57h1v3h-1zM493 63h1v3h-1zM493 69h1v3h-1zM493 75h1v3h-1zM493 81h1v3h-1zM493 87h1v3h-1zM493 93h1v3h-1zM493 99h1v3h-1zM493 105h1v3h-1zM493 111h1v3h-1zM493 117h1v3h-1zM493 123h1v3h-1zM493 129h1v3h-1zM493 135h1v3h-1zM493 141h1v3h-1zM493 147h1v3h-1zM493 153h1v3h-1zM493 159h1v3h-1zM493 165h1v3h-1zM493 171h1v3h-1zM493 177h1v3h-1zM493 183h1v3h-1zM493 189h1v3h-1zM493 195h1v3h-1zM493 201h1v3h-1zM493 207h1v3h-1zM493 213h1v3h-1zM493 219h1v3h-1zM493 225h1v3h-1zM493 231h1v3h-1zM493 237h1v3h-1zM493 243h1v3h-1zM493 249h1v3h-1zM493 255h1v3h-1zM493 261h1v3h-1zM493 267h1v3h-1zM493 273h1v3h-1zM493 279h1v3h-1zM493 285h1v3h-1zM493 297h1v3h-1zM493 303h1v3h-1zM493 309h1v3h-1zM493 315h1v3h-1zM493 321h1v3h-1zM493 327h1v3h-1zM493 333h1v3h-1zM493 339h1v3h-1zM493 345h1v3h-1zM493 351h1v3h-1zM493 357h1v3h-1zM493 363h1v3h-1zM493 369h1v3h-1zM493 375h1v3h-1zM493 381h1v3h-1zM493 387h1v3h-1zM493 393h1v3h-1zM493 399h1v3h-1zM493 405h1v3h-1zM493 411h1v3h-1zM493 417h1v3h-1zM493 424h1v2h-1zM493 429h1v3h-1zM493 435h1v3h-1zM493 441h1v3h-1zM493 447h1v3h-1zM493 453h1v3h-1zM493 459h1v3h-1zM493 465h1v3h-1zM493 471h1v3h-1zM493 477h1v3h-1zM493 483h1v3h-1zM493 489h1v3h-1zM493 495h1v3h-1zM493 501h1v3h-1zM493 507h1v3h-1zM493 513h1v3h-1zM493 519h1v3h-1zM493 525h1v3h-1zM493 531h1v3h-1zM493 537h1v3h-1zM493 543h1v3h-1zM493 549h1v2h-1zM525 34h1v2h-1zM525 39h1v3h-1zM525 45h1v3h-1zM525 51h1v3h-1zM525 57h1v3h-1zM525 63h1v3h-1zM525 69h1v3h-1zM525 75h1v3h-1zM525 81h1v3h-1zM525 87h1v3h-1zM525 93h1v3h-1zM525 99h1v3h-1zM525 105h1v3h-1zM525 111h1v3h-1zM525 117h1v3h-1zM525 123h1v3h-1zM525 129h1v3h-1zM525 135h1v3h-1zM525 141h1v3h-1zM525 147h1v3h-1zM525 153h1v3h-1zM525 159h1v3h-1zM525 165h1v3h-1zM525 171h1v3h-1zM525 177h1v3h-1zM525 183h1v3h-1zM525 189h1v3h-1zM525 195h1v3h-1zM525 201h1v3h-1zM525 207h1v3h-1zM525 213h1v3h-1zM525 219h1v3h-1zM525 225h1v3h-1zM525 231h1v3h-1zM525 237h1v3h-1zM525 243h1v3h-1zM525 249h1v3h-1zM525 255h1v3h-1zM525 261h1v3h-1zM525 267h1v3h-1zM525 273h1v3h-1zM525 279h1v3h-1zM525 285h1v3h-1zM525 297h1v3h-1zM525 303h1v3h-1zM525 309h1v3h-1zM525 315h1v3h-1zM525 321h1v3h-1zM525 327h1v3h-1zM525 333h1v3h-1zM525 339h1v3h-1zM525 345h1v3h-1zM525 351h1v3h-1zM525 357h1v3h-1zM525 363h1v3h-1zM525 369h1v3h-1zM525 375h1v3h-1zM525 381h1v3h-1zM525 387h1v3h-1zM525 393h1v3h-1zM525 399h1v3h-1zM525 405h1v3h-1zM525 411h1v3h-1zM525 417h1v3h-1zM525 424h1v2h-1zM525 429h1v3h-1zM525 435h1v3h-1zM525 441h1v3h-1zM525 447h1v3h-1zM525 453h1v3h-1zM525 459h1v3h-1zM525 465h1v3h-1zM525 471h1v3h-1zM525 477h1v3h-1zM525 483h1v3h-1zM525 489h1v3h-1zM525 495h1v3h-1zM525 501h1v3h-1zM525 507h1v3h-1zM525 513h1v3h-1zM525 519h1v3h-1zM525 525h1v3h-1zM525 531h1v3h-1zM525 537h1v3h-1zM525 543h1v3h-1zM525 549h1v2h-1zM557 34h1v2h-1zM557 39h1v3h-1zM557 45h1v3h-1zM557 51h1v3h-1zM557 57h1v3h-1zM557 63h1v3h-1zM557 69h1v3h-1zM557 75h1v3h-1zM557 81h1v3h-1zM557 87h1v3h-1zM557 93h1v3h-1zM557 99h1v3h-1zM557 105h1v3h-1zM557 111h1v3h-1zM557 117h1v3h-1zM557 123h1v3h-1zM557 129h1v3h-1zM557 135h1v3h-1zM557 141h1v3h-1zM557 147h1v3h-1zM557 153h1v3h-1zM557 159h1v3h-1zM557 165h1v3h-1zM557 171h1v3h-1zM557 177h1v3h-1zM557 183h1v3h-1zM557 189h1v3h-1zM557 195h1v3h-1zM557 201h1v3h-1zM557 207h1v3h-1zM557 213h1v3h-1zM557 219h1v3h-1zM557 225h1v3h-1zM557 231h1v3h-1zM557 237h1v3h-1zM557 243h1v3h-1zM557 249h1v3h-1zM557 255h1v3h-1zM557 261h1v3h-1zM557 267h1v3h-1zM557 273h1v3h-1zM557 279h1v3h-1zM557 285h1v3h-1zM557 297h1v3h-1zM557 303h1v3h-1zM557 309h1v3h-1zM557 315h1v3h-1zM557 321h1v3h-1zM557 327h1v3h-1zM557 333h1v3h-1zM557 339h1v3h-1zM557 345h1v3h-1zM557 351h1v3h-1zM557 357h1v3h-1zM557 363h1v3h-1zM557 369h1v3h-1zM557 375h1v3h-1zM557 381h1v3h-1zM557 387h1v3h-1zM557 393h1v3h-1zM557 399h1v3h-1zM557 405h1v3h-1zM557 411h1v3h-1zM557 417h1v3h-1zM557 424h1v2h-1zM557 429h1v3h-1zM557 435h1v3h-1zM557 441h1v3h-1zM557 447h1v3h-1zM557 453h1v3h-1zM557 459h1v3h-1zM557 465h1v3h-1zM557 471h1v3h-1zM557 477h1v3h-1zM557 483h1v3h-1zM557 489h1v3h-1zM557 495h1v3h-1zM557 501h1v3h-1zM557 507h1v3h-1zM557 513h1v3h-1zM557 519h1v3h-1zM557 525h1v3h-1zM557 531h1v3h-1zM557 537h1v3h-1zM557 543h1v3h-1zM557 549h1v2h-1zM589 34h1v2h-1zM589 39h1v3h-1zM589 45h1v3h-1zM589 51h1v3h-1zM589 57h1v3h-1zM589 63h1v3h-1zM589 69h1v3h-1zM589 75h1v3h-1zM589 81h1v3h-1zM589 87h1v3h-1zM589 93h1v3h-1zM589 99h1v3h-1zM589 105h1v3h-1zM589 111h1v3h-1zM589 117h1v3h-1zM589 123h1v3h-1zM589 129h1v3h-1zM589 135h1v3h-1zM589 141h1v3h-1zM589 147h1v3h-1zM589 153h1v3h-1zM589 159h1v3h-1zM589 165h1v3h-1zM589 171h1v3h-1zM589 177h1v3h-1zM589 183h1v3h-1zM589 189h1v3h-1zM589 195h1v3h-1zM589 201h1v3h-1zM589 207h1v3h-1zM589 213h1v3h-1zM589 219h1v3h-1zM589 225h1v3h-1zM589 231h1v3h-1zM589 237h1v3h-1zM589 243h1v3h-1zM589 249h1v3h-1zM589 255h1v3h-1zM589 261h1v3h-1zM589 267h1v3h-1zM589 273h1v3h-1zM589 279h1v3h-1zM589 285h1v3h-1zM589 297h1v3h-1zM589 303h1v3h-1zM589 309h1v3h-1zM589 315h1v3h-1zM589 321h1v3h-1zM589 327h1v3h-1zM589 333h1v3h-1zM589 339h1v3h-1zM589 345h1v3h-1zM589 351h1v3h-1zM589 357h1v3h-1zM589 363h1v3h-1zM589 369h1v3h-1zM589 375h1v3h-1zM589 381h1v3h-1zM589 387h1v3h-1zM589 393h1v3h-1zM589 399h1v3h-1zM589 405h1v3h-1zM589 411h1v3h-1zM589 417h1v3h-1zM589 424h1v2h-1zM589 429h1v3h-1zM589 435h1v3h-1zM589 441h1v3h-1zM589 447h1v3h-1zM589 453h1v3h-1zM589 459h1v3h-1zM589 465h1v3h-1zM589 471h1v3h-1zM589 477h1v3h-1zM589 483h1v3h-1zM589 489h1v3h-1zM589 495h1v3h-1zM589 501h1v3h-1zM589 507h1v3h-1zM589 513h1v3h-1zM589 519h1v3h-1zM589 525h1v3h-1zM589 531h1v3h-1zM589 537h1v3h-1zM589 543h1v3h-1zM589 549h1v2h-1zM621 34h1v2h-1zM621 39h1v3h-1zM621 45h1v3h-1zM621 51h1v3h-1zM621 57h1v3h-1zM621 63h1v3h-1zM621 69h1v3h-1zM621 75h1v3h-1zM621 81h1v3h-1zM621 87h1v3h-1zM621 93h1v3h-1zM621 99h1v3h-1zM621 105h1v3h-1zM621 111h1v3h-1zM621 117h1v3h-1zM621 123h1v3h-1zM621 129h1v3h-1zM621 135h1v3h-1zM621 141h1v3h-1zM621 147h1v3h-1zM621 153h1v3h-1zM621 159h1v3h-1zM621 165h1v3h-1zM621 171h1v3h-1zM621 177h1v3h-1zM621 183h1v3h-1zM621 189h1v3h-1zM621 195h1v3h-1zM621 201h1v3h-1zM621 207h1v3h-1zM621 213h1v3h-1zM621 219h1v3h-1zM621 225h1v3h-1zM621 231h1v3h-1zM621 237h1v3h-1zM621 243h1v3h-1zM621 249h1v3h-1zM621 255h1v3h-1zM621 261h1v3h-1zM621 267h1v3h-1zM621 273h1v3h-1zM621 279h1v3h-1zM621 285h1v3h-1zM621 297h1v3h-1zM621 303h1v3h-1zM621 309h1v3h-1zM621 315h1v3h-1zM621 321h1v3h-1zM621 327h1v3h-1zM621 333h1v3h-1zM621 339h1v3h-1zM621 345h1v3h-1zM621 351h1v3h-1zM621 357h1v3h-1zM621 363h1v3h-1zM621 369h1v3h-1zM621 375h1v3h-1zM621 381h1v3h-1zM621 387h1v3h-1zM621 393h1v3h-1zM621 399h1v3h-1zM621 405h1v3h-1zM621 411h1v3h-1zM621 417h1v3h-1zM621 424h1v2h-1zM621 429h1v3h-1zM621 435h1v3h-1zM621 441h1v3h-1zM621 447h1v3h-1zM621 453h1v3h-1zM621 459h1v3h-1zM621 465h1v3h-1zM621 471h1v3h-1zM621 477h1v3h-1zM621 483h1v3h-1zM621 489h1v3h-1zM621 495h1v3h-1zM621 501h1v3h-1zM621 507h1v3h-1zM621 513h1v3h-1zM621 519h1v3h-1zM621 525h1v3h-1zM621 531h1v3h-1zM621 537h1v3h-1zM621 543h1v3h-1zM621 549h1v2h-1zM653 34h1v2h-1zM653 39h1v3h-1zM653 45h1v3h-1zM653 51h1v3h-1zM653 57h1v3h-1zM653 63h1v3h-1zM653 69h1v3h-1zM653 75h1v3h-1zM653 81h1v3h-1zM653 87h1v3h-1zM653 93h1v3h-1zM653 99h1v3h-1zM653 105h1v3h-1zM653 111h1v3h-1zM653 117h1v3h-1zM653 123h1v3h-1zM653 129h1v3h-1zM653 135h1v3h-1zM653 141h1v3h-1zM653 147h1v3h-1zM653 153h1v3h-1zM653 159h1v3h-1zM653 165h1v3h-1zM653 171h1v3h-1zM653 177h1v3h-1zM653 183h1v3h-1zM653 189h1v3h-1zM653 195h1v3h-1zM653 201h1v3h-1zM653 207h1v3h-1zM653 213h1v3h-1zM653 219h1v3h-1zM653 225h1v3h-1zM653 231h1v3h-1zM653 237h1v3h-1zM653 243h1v3h-1zM653 249h1v3h-1zM653 255h1v3h-1zM653 261h1v3h-1zM653 267h1v3h-1zM653 273h1v3h-1zM653 279h1v3h-1zM653 285h1v3h-1zM653 297h1v3h-1zM653 303h1v3h-1zM653 309h1v3h-1zM653 315h1v3h-1zM653 321h1v3h-1zM653 327h1v3h-1zM653 333h1v3h-1zM653 339h1v3h-1zM653 345h1v3h-1zM653 351h1v3h-1zM653 357h1v3h-1zM653 363h1v3h-1zM653 369h1v3h-1zM653 375h1v3h-1zM653 381h1v3h-1zM653 387h1v3h-1zM653 393h1v3h-1zM653 399h1v3h-1zM653 405h1v3h-1zM653 411h1v3h-1zM653 417h1v3h-1zM653 424h1v2h-1zM653 429h1v3h-1zM653 435h1v3h-1zM653 441h1v3h-1zM653 447h1v3h-1zM653 453h1v3h-1zM653 459h1v3h-1zM653 465h1v3h-1zM653 471h1v3h-1zM653 477h1v3h-1zM653 483h1v3h-1zM653 489h1v3h-1zM653 495h1v3h-1zM653 501h1v3h-1zM653 507h1v3h-1zM653 513h1v3h-1zM653 519h1v3h-1zM653 525h1v3h-1zM653 531h1v3h-1zM653 537h1v3h-1zM653 543h1v3h-1zM653 549h1v2h-1zM14 57h3v1h-3zM20 57h3v1h-3zM26 57h3v1h-3zM32 57h3v1h-3zM38 57h3v1h-3zM44 57h3v1h-3zM50 57h3v1h-3zM56 57h3v1h-3zM62 57h3v1h-3zM68 57h3v1h-3zM74 57h3v1h-3zM80 57h3v1h-3zM86 57h3v1h-3zM92 57h3v1h-3zM98 57h3v1h-3zM104 57h3v1h-3zM110 57h3v1h-3zM116 57h3v1h-3zM122 57h3v1h-3zM128 57h3v1h-3zM134 57h3v1h-3zM140 57h3v1h-3zM146 57h3v1h-3zM152 57h3v1h-3zM158 57h3v1h-3zM164 57h3v1h-3zM170 57h3v1h-3zM176 57h3v1h-3zM182 57h3v1h-3zM188 57h3v1h-3zM194 57h3v1h-3zM200 57h3v1h-3zM206 57h3v1h-3zM212 57h3v1h-3zM218 57h3v1h-3zM224 57h3v1h-3zM230 57h3v1h-3zM236 57h3v1h-3zM242 57h3v1h-3zM248 57h3v1h-3zM254 57h3v1h-3zM260 57h3v1h-3zM266 57h3v1h-3zM272 57h3v1h-3zM278 57h3v1h-3zM284 57h3v1h-3zM290 57h3v1h-3zM296 57h3v1h-3zM302 57h3v1h-3zM308 57h3v1h-3zM314 57h3v1h-3zM320 57h3v1h-3zM326 57h3v1h-3zM332 57h3v1h-3zM338 57h3v1h-3zM344 57h3v1h-3zM350 57h3v1h-3zM356 57h3v1h-3zM362 57h3v1h-3zM368 57h3v1h-3zM374 57h3v1h-3zM380 57h3v1h-3zM386 57h3v1h-3zM392 57h3v1h-3zM398 57h3v1h-3zM404 57h3v1h-3zM410 57h3v1h-3zM416 57h3v1h-3zM422 57h3v1h-3zM428 57h3v1h-3zM434 57h3v1h-3zM440 57h3v1h-3zM446 57h3v1h-3zM452 57h3v1h-3zM458 57h3v1h-3zM464 57h3v1h-3zM470 57h3v1h-3zM476 57h3v1h-3zM482 57h3v1h-3zM488 57h3v1h-3zM494 57h3v1h-3zM500 57h3v1h-3zM506 57h3v1h-3zM512 57h3v1h-3zM518 57h3v1h-3zM524 57h3v1h-3zM530 57h3v1h-3zM536 57h3v1h-3zM542 57h3v1h-3zM548 57h3v1h-3zM554 57h3v1h-3zM560 57h3v1h-3zM566 57h3v1h-3zM572 57h3v1h-3zM578 57h3v1h-3zM584 57h3v1h-3zM590 57h3v1h-3zM596 57h3v1h-3zM602 57h3v1h-3zM608 57h3v1h-3zM614 57h3v1h-3zM620 57h3v1h-3zM626 57h3v1h-3zM632 57h3v1h-3zM638 57h3v1h-3zM644 57h3v1h-3zM650 57h3v1h-3zM656 57h3v1h-3zM662 57h3v1h-3zM668 57h3v1h-3zM674 57h3v1h-3zM14 90h3v1h-3zM20 90h3v1h-3zM26 90h3v1h-3zM32 90h3v1h-3zM38 90h3v1h-3zM44 90h3v1h-3zM50 90h3v1h-3zM56 90h3v1h-3zM62 90h3v1h-3zM68 90h3v1h-3zM74 90h3v1h-3zM80 90h3v1h-3zM86 90h3v1h-3zM92 90h3v1h-3zM98 90h3v1h-3zM104 90h3v1h-3zM110 90h3v1h-3zM116 90h3v1h-3zM122 90h3v1h-3zM128 90h3v1h-3zM134 90h3v1h-3zM140 90h3v1h-3zM146 90h3v1h-3zM152 90h3v1h-3zM158 90h3v1h-3zM164 90h3v1h-3zM170 90h3v1h-3zM176 90h3v1h-3zM182 90h3v1h-3zM188 90h3v1h-3zM194 90h3v1h-3zM200 90h3v1h-3zM206 90h3v1h-3zM212 90h3v1h-3zM218 90h3v1h-3zM224 90h3v1h-3zM230 90h3v1h-3zM236 90h3v1h-3zM242 90h3v1h-3zM248 90h3v1h-3zM254 90h3v1h-3zM260 90h3v1h-3zM266 90h3v1h-3zM272 90h3v1h-3zM278 90h3v1h-3zM284 90h3v1h-3zM290 90h3v1h-3zM296 90h3v1h-3zM302 90h3v1h-3zM308 90h3v1h-3zM314 90h3v1h-3zM320 90h3v1h-3zM326 90h3v1h-3zM332 90h3v1h-3zM338 90h3v1h-3zM344 90h3v1h-3zM350 90h3v1h-3zM356 90h3v1h-3zM362 90h3v1h-3zM368 90h3v1h-3zM374 90h3v1h-3zM380 90h3v1h-3zM386 90h3v1h-3zM392 90h3v1h-3zM398 90h3v1h-3zM404 90h3v1h-3zM410 90h3v1h-3zM416 90h3v1h-3zM422 90h3v1h-3zM428 90h3v1h-3zM434 90h3v1h-3zM440 90h3v1h-3zM446 90h3v1h-3zM452 90h3v1h-3zM458 90h3v1h-3zM464 90h3v1h-3zM470 90h3v1h-3zM476 90h3v1h-3zM482 90h3v1h-3zM488 90h3v1h-3zM494 90h3v1h-3zM500 90h3v1h-3zM506 90h3v1h-3zM512 90h3v1h-3zM518 90h3v1h-3zM524 90h3v1h-3zM530 90h3v1h-3zM536 90h3v1h-3zM542 90h3v1h-3zM548 90h3v1h-3zM554 90h3v1h-3zM560 90h3v1h-3zM566 90h3v1h-3zM572 90h3v1h-3zM578 90h3v1h-3zM584 90h3v1h-3zM590 90h3v1h-3zM596 90h3v1h-3zM602 90h3v1h-3zM608 90h3v1h-3zM614 90h3v1h-3zM620 90h3v1h-3zM626 90h3v1h-3zM632 90h3v1h-3zM638 90h3v1h-3zM644 90h3v1h-3zM650 90h3v1h-3zM656 90h3v1h-3zM662 90h3v1h-3zM668 90h3v1h-3zM674 90h3v1h-3zM14 123h3v1h-3zM20 123h3v1h-3zM26 123h3v1h-3zM32 123h3v1h-3zM38 123h3v1h-3zM44 123h3v1h-3zM50 123h3v1h-3zM56 123h3v1h-3zM62 123h3v1h-3zM68 123h3v1h-3zM74 123h3v1h-3zM80 123h3v1h-3zM86 123h3v1h-3zM92 123h3v1h-3zM98 123h3v1h-3zM104 123h3v1h-3zM110 123h3v1h-3zM116 123h3v1h-3zM122 123h3v1h-3zM128 123h3v1h-3zM134 123h3v1h-3zM140 123h3v1h-3zM146 123h3v1h-3zM152 123h3v1h-3zM158 123h3v1h-3zM164 123h3v1h-3zM170 123h3v1h-3zM176 123h3v1h-3zM182 123h3v1h-3zM188 123h3v1h-3zM194 123h3v1h-3zM200 123h3v1h-3zM206 123h3v1h-3zM212 123h3v1h-3zM218 123h3v1h-3zM224 123h3v1h-3zM230 123h3v1h-3zM236 123h3v1h-3zM242 123h3v1h-3zM248 123h3v1h-3zM254 123h3v1h-3zM260 123h3v1h-3zM266 123h3v1h-3zM272 123h3v1h-3zM278 123h3v1h-3zM284 123h3v1h-3zM290 123h3v1h-3zM296 123h3v1h-3zM302 123h3v1h-3zM308 123h3v1h-3zM314 123h3v1h-3zM320 123h3v1h-3zM326 123h3v1h-3zM332 123h3v1h-3zM338 123h3v1h-3zM344 123h3v1h-3zM350 123h3v1h-3zM356 123h3v1h-3zM362 123h3v1h-3zM368 123h3v1h-3zM374 123h3v1h-3zM380 123h3v1h-3zM386 123h3v1h-3zM392 123h3v1h-3zM398 123h3v1h-3zM404 123h3v1h-3zM410 123h3v1h-3zM416 123h3v1h-3zM422 123h3v1h-3zM428 123h3v1h-3zM434 123h3v1h-3zM440 123h3v1h-3zM446 123h3v1h-3zM452 123h3v1h-3zM458 123h3v1h-3zM464 123h3v1h-3zM470 123h3v1h-3zM476 123h3v1h-3zM482 123h3v1h-3zM488 123h3v1h-3zM494 123h3v1h-3zM500 123h3v1h-3zM506 123h3v1h-3zM512 123h3v1h-3zM518 123h3v1h-3zM524 123h3v1h-3zM530 123h3v1h-3zM536 123h3v1h-3zM542 123h3v1h-3zM548 123h3v1h-3zM554 123h3v1h-3zM560 123h3v1h-3zM566 123h3v1h-3zM572 123h3v1h-3zM578 123h3v1h-3zM584 123h3v1h-3zM590 123h3v1h-3zM596 123h3v1h-3zM602 123h3v1h-3zM608 123h3v1h-3zM614 123h3v1h-3zM620 123h3v1h-3zM626 123h3v1h-3zM632 123h3v1h-3zM638 123h3v1h-3zM644 123h3v1h-3zM650 123h3v1h-3zM656 123h3v1h-3zM662 123h3v1h-3zM668 123h3v1h-3zM674 123h3v1h-3zM14 156h3v1h-3zM20 156h3v1h-3zM26 156h3v1h-3zM32 156h3v1h-3zM38 156h3v1h-3zM44 156h3v1h-3zM50 156h3v1h-3zM56 156h3v1h-3zM62 156h3v1h-3zM68 156h3v1h-3zM74 156h3v1h-3zM80 156h3v1h-3zM86 156h3v1h-3zM92 156h3v1h-3zM98 156h3v1h-3zM104 156h3v1h-3zM110 156h3v1h-3zM116 156h3v1h-3zM122 156h3v1h-3zM128 156h3v1h-3zM134 156h3v1h-3zM140 156h3v1h-3zM146 156h3v1h-3zM152 156h3v1h-3zM158 156h3v1h-3zM164 156h3v1h-3zM170 156h3v1h-3zM176 156h3v1h-3zM182 156h3v1h-3zM188 156h3v1h-3zM194 156h3v1h-3zM200 156h3v1h-3zM206 156h3v1h-3zM212 156h3v1h-3zM218 156h3v1h-3zM224 156h3v1h-3zM230 156h3v1h-3zM236 156h3v1h-3zM242 156h3v1h-3zM248 156h3v1h-3zM254 156h3v1h-3zM260 156h3v1h-3zM266 156h3v1h-3zM272 156h3v1h-3zM278 156h3v1h-3zM284 156h3v1h-3zM290 156h3v1h-3zM296 156h3v1h-3zM302 156h3v1h-3zM308 156h3v1h-3zM314 156h3v1h-3zM320 156h3v1h-3zM326 156h3v1h-3zM332 156h3v1h-3zM338 156h3v1h-3zM344 156h3v1h-3zM350 156h3v1h-3zM356 156h3v1h-3zM362 156h3v1h-3zM368 156h3v1h-3zM374 156h3v1h-3zM380 156h3v1h-3zM386 156h3v1h-3zM392 156h3v1h-3zM398 156h3v1h-3zM404 156h3v1h-3zM410 156h3v1h-3zM416 156h3v1h-3zM422 156h3v1h-3zM428 156h3v1h-3zM434 156h3v1h-3zM440 156h3v1h-3zM446 156h3v1h-3zM452 156h3v1h-3zM458 156h3v1h-3zM464 156h3v1h-3zM470 156h3v1h-3zM476 156h3v1h-3zM482 156h3v1h-3zM488 156h3v1h-3zM494 156h3v1h-3zM500 156h3v1h-3zM506 156h3v1h-3zM512 156h3v1h-3zM518 156h3v1h-3zM524 156h3v1h-3zM530 156h3v1h-3zM536 156h3v1h-3zM542 156h3v1h-3zM548 156h3v1h-3zM554 156h3v1h-3zM560 156h3v1h-3zM566 156h3v1h-3zM572 156h3v1h-3zM578 156h3v1h-3zM584 156h3v1h-3zM590 156h3v1h-3zM596 156h3v1h-3zM602 156h3v1h-3zM608 156h3v1h-3zM614 156h3v1h-3zM620 156h3v1h-3zM626 156h3v1h-3zM632 156h3v1h-3zM638 156h3v1h-3zM644 156h3v1h-3zM650 156h3v1h-3zM656 156h3v1h-3zM662 156h3v1h-3zM668 156h3v1h-3zM674 156h3v1h-3zM14 189h3v1h-3zM20 189h3v1h-3zM26 189h3v1h-3zM32 189h3v1h-3zM38 189h3v1h-3zM44 189h3v1h-3zM50 189h3v1h-3zM56 189h3v1h-3zM62 189h3v1h-3zM68 189h3v1h-3zM74 189h3v1h-3zM80 189h3v1h-3zM86 189h3v1h-3zM92 189h3v1h-3zM98 189h3v1h-3zM104 189h3v1h-3zM110 189h3v1h-3zM116 189h3v1h-3zM122 189h3v1h-3zM128 189h3v1h-3zM134 189h3v1h-3zM140 189h3v1h-3zM146 189h3v1h-3zM152 189h3v1h-3zM158 189h3v1h-3zM164 189h3v1h-3zM170 189h3v1h-3zM176 189h3v1h-3zM182 189h3v1h-3zM188 189h3v1h-3zM194 189h3v1h-3zM200 189h3v1h-3zM206 189h3v1h-3zM212 189h3v1h-3zM218 189h3v1h-3zM224 189h3v1h-3zM230 189h3v1h-3zM236 189h3v1h-3zM242 189h3v1h-3zM248 189h3v1h-3zM254 189h3v1h-3zM260 189h3v1h-3zM266 189h3v1h-3zM272 189h3v1h-3zM278 189h3v1h-3zM284 189h3v1h-3zM290 189h3v1h-3zM296 189h3v1h-3zM302 189h3v1h-3zM308 189h3v1h-3zM314 189h3v1h-3zM320 189h3v1h-3zM326 189h3v1h-3zM332 189h3v1h-3zM338 189h3v1h-3zM344 189h3v1h-3zM350 189h3v1h-3zM356 189h3v1h-3zM362 189h3v1h-3zM368 189h3v1h-3zM374 189h3v1h-3zM380 189h3v1h-3zM386 189h3v1h-3zM392 189h3v1h-3zM398 189h3v1h-3zM404 189h3v1h-3zM410 189h3v1h-3zM416 189h3v1h-3zM422 189h3v1h-3zM428 189h3v1h-3zM434 189h3v1h-3zM440 189h3v1h-3zM446 189h3v1h-3zM452 189h3v1h-3zM458 189h3v1h-3zM464 189h3v1h-3zM470 189h3v1h-3zM476 189h3v1h-3zM482 189h3v1h-3zM488 189h3v1h-3zM494 189h3v1h-3zM500 189h3v1h-3zM506 189h3v1h-3zM512 189h3v1h-3zM518 189h3v1h-3zM524 189h3v1h-3zM530 189h3v1h-3zM536 189h3v1h-3zM542 189h3v1h-3zM548 189h3v1h-3zM554 189h3v1h-3zM560 189h3v1h-3zM566 189h3v1h-3zM572 189h3v1h-3zM578 189h3v1h-3zM584 189h3v1h-3zM590 189h3v1h-3zM596 189h3v1h-3zM602 189h3v1h-3zM608 189h3v1h-3zM614 189h3v1h-3zM620 189h3v1h-3zM626 189h3v1h-3zM632 189h3v1h-3zM638 189h3v1h-3zM644 189h3v1h-3zM650 189h3v1h-3zM656 189h3v1h-3zM662 189h3v1h-3zM668 189h3v1h-3zM674 189h3v1h-3zM14 222h3v1h-3zM20 222h3v1h-3zM26 222h3v1h-3zM32 222h3v1h-3zM38 222h3v1h-3zM44 222h3v1h-3zM50 222h3v1h-3zM56 222h3v1h-3zM62 222h3v1h-3zM68 222h3v1h-3zM74 222h3v1h-3zM80 222h3v1h-3zM86 222h3v1h-3zM92 222h3v1h-3zM98 222h3v1h-3zM104 222h3v1h-3zM110 222h3v1h-3zM116 222h3v1h-3zM122 222h3v1h-3zM128 222h3v1h-3zM134 222h3v1h-3zM140 222h3v1h-3zM146 222h3v1h-3zM152 222h3v1h-3zM158 222h3v1h-3zM164 222h3v1h-3zM170 222h3v1h-3zM176 222h3v1h-3zM182 222h3v1h-3zM188 222h3v1h-3zM194 222h3v1h-3zM200 222h3v1h-3zM206 222h3v1h-3zM212 222h3v1h-3zM218 222h3v1h-3zM224 222h3v1h-3zM230 222h3v1h-3zM236 222h3v1h-3zM242 222h3v1h-3zM248 222h3v1h-3zM254 222h3v1h-3zM260 222h3v1h-3zM266 222h3v1h-3zM272 222h3v1h-3zM278 222h3v1h-3zM284 222h3v1h-3zM290 222h3v1h-3zM296 222h3v1h-3zM302 222h3v1h-3zM308 222h3v1h-3zM314 222h3v1h-3zM320 222h3v1h-3zM326 222h3v1h-3zM332 222h3v1h-3zM338 222h3v1h-3zM344 222h3v1h-3zM350 222h3v1h-3zM356 222h3v1h-3zM362 222h3v1h-3zM368 222h3v1h-3zM374 222h3v1h-3zM380 222h3v1h-3zM386 222h3v1h-3zM392 222h3v1h-3zM398 222h3v1h-3zM404 222h3v1h-3zM410 222h3v1h-3zM416 222h3v1h-3zM422 222h3v1h-3zM428 222h3v1h-3zM434 222h3v1h-3zM440 222h3v1h-3zM446 222h3v1h-3zM452 222h3v1h-3zM458 222h3v1h-3zM464 222h3v1h-3zM470 222h3v1h-3zM476 222h3v1h-3zM482 222h3v1h-3zM488 222h3v1h-3zM494 222h3v1h-3zM500 222h3v1h-3zM506 222h3v1h-3zM512 222h3v1h-3zM518 222h3v1h-3zM524 222h3v1h-3zM530 222h3v1h-3zM536 222h3v1h-3zM542 222h3v1h-3zM548 222h3v1h-3zM554 222h3v1h-3zM560 222h3v1h-3zM566 222h3v1h-3zM572 222h3v1h-3zM578 222h3v1h-3zM584 222h3v1h-3zM590 222h3v1h-3zM596 222h3v1h-3zM602 222h3v1h-3zM608 222h3v1h-3zM614 222h3v1h-3zM620 222h3v1h-3zM626 222h3v1h-3zM632 222h3v1h-3zM638 222h3v1h-3zM644 222h3v1h-3zM650 222h3v1h-3zM656 222h3v1h-3zM662 222h3v1h-3zM668 222h3v1h-3zM674 222h3v1h-3zM14 255h3v1h-3zM20 255h3v1h-3zM26 255h3v1h-3zM32 255h3v1h-3zM38 255h3v1h-3zM44 255h3v1h-3zM50 255h3v1h-3zM56 255h3v1h-3zM62 255h3v1h-3zM68 255h3v1h-3zM74 255h3v1h-3zM80 255h3v1h-3zM86 255h3v1h-3zM92 255h3v1h-3zM98 255h3v1h-3zM104 255h3v1h-3zM110 255h3v1h-3zM116 255h3v1h-3zM122 255h3v1h-3zM128 255h3v1h-3zM134 255h3v1h-3zM140 255h3v1h-3zM146 255h3v1h-3zM152 255h3v1h-3zM158 255h3v1h-3zM164 255h3v1h-3zM170 255h3v1h-3zM176 255h3v1h-3zM182 255h3v1h-3zM188 255h3v1h-3zM194 255h3v1h-3zM200 255h3v1h-3zM206 255h3v1h-3zM212 255h3v1h-3zM218 255h3v1h-3zM224 255h3v1h-3zM230 255h3v1h-3zM236 255h3v1h-3zM242 255h3v1h-3zM248 255h3v1h-3zM254 255h3v1h-3zM260 255h3v1h-3zM266 255h3v1h-3zM272 255h3v1h-3zM278 255h3v1h-3zM284 255h3v1h-3zM290 255h3v1h-3zM296 255h3v1h-3zM302 255h3v1h-3zM308 255h3v1h-3zM314 255h3v1h-3zM320 255h3v1h-3zM326 255h3v1h-3zM332 255h3v1h-3zM338 255h3v1h-3zM344 255h3v1h-3zM350 255h3v1h-3zM356 255h3v1h-3zM362 255h3v1h-3zM368 255h3v1h-3zM374 255h3v1h-3zM380 255h3v1h-3zM386 255h3v1h-3zM392 255h3v1h-3zM398 255h3v1h-3zM404 255h3v1h-3zM410 255h3v1h-3zM416 255h3v1h-3zM422 255h3v1h-3zM428 255h3v1h-3zM434 255h3v1h-3zM440 255h3v1h-3zM446 255h3v1h-3zM452 255h3v1h-3zM458 255h3v1h-3zM464 255h3v1h-3zM470 255h3v1h-3zM476 255h3v1h-3zM482 255h3v1h-3zM488 255h3v1h-3zM494 255h3v1h-3zM500 255h3v1h-3zM506 255h3v1h-3zM512 255h3v1h-3zM518 255h3v1h-3zM524 255h3v1h-3zM530 255h3v1h-3zM536 255h3v1h-3zM542 255h3v1h-3zM548 255h3v1h-3zM554 255h3v1h-3zM560 255h3v1h-3zM566 255h3v1h-3zM572 255h3v1h-3zM578 255h3v1h-3zM584 255h3v1h-3zM590 255h3v1h-3zM596 255h3v1h-3zM602 255h3v1h-3zM608 255h3v1h-3zM614 255h3v1h-3zM620 255h3v1h-3zM626 255h3v1h-3zM632 255h3v1h-3zM638 255h3v1h-3zM644 255h3v1h-3zM650 255h3v1h-3zM656 255h3v1h-3zM662 255h3v1h-3zM668 255h3v1h-3zM674 255h3v1h-3zM14 288h3v1h-3zM20 288h3v1h-3zM26 288h3v1h-3zM32 288h3v1h-3zM38 288h3v1h-3zM44 288h3v1h-3zM50 288h3v1h-3zM56 288h3v1h-3zM62 288h3v1h-3zM68 288h3v1h-3zM74 288h3v1h-3zM80 288h3v1h-3zM86 288h3v1h-3zM92 288h3v1h-3zM98 288h3v1h-3zM104 288h3v1h-3zM110 288h3v1h-3zM116 288h3v1h-3zM122 288h3v1h-3zM128 288h3v1h-3zM134 288h3v1h-3zM140 288h3v1h-3zM146 288h3v1h-3zM152 288h3v1h-3zM158 288h3v1h-3zM164 288h3v1h-3zM170 288h3v1h-3zM176 288h3v1h-3zM182 288h3v1h-3zM188 288h3v1h-3zM194 288h3v1h-3zM200 288h3v1h-3zM206 288h3v1h-3zM212 288h3v1h-3zM218 288h3v1h-3zM224 288h3v1h-3zM230 288h3v1h-3zM236 288h3v1h-3zM242 288h3v1h-3zM248 288h3v1h-3zM254 288h3v1h-3zM260 288h3v1h-3zM266 288h3v1h-3zM272 288h3v1h-3zM278 288h3v1h-3zM284 288h3v1h-3zM290 288h3v1h-3zM296 288h3v1h-3zM302 288h3v1h-3zM308 288h3v1h-3zM314 288h3v1h-3zM320 288h3v1h-3zM326 288h3v1h-3zM332 288h3v1h-3zM338 288h3v1h-3zM344 288h3v1h-3zM350 288h3v1h-3zM356 288h3v1h-3zM362 288h3v1h-3zM368 288h3v1h-3zM374 288h3v1h-3zM380 288h3v1h-3zM386 288h3v1h-3zM392 288h3v1h-3zM398 288h3v1h-3zM404 288h3v1h-3zM410 288h3v1h-3zM416 288h3v1h-3zM422 288h3v1h-3zM428 288h3v1h-3zM434 288h3v1h-3zM440 288h3v1h-3zM446 288h3v1h-3zM452 288h3v1h-3zM458 288h3v1h-3zM464 288h3v1h-3zM470 288h3v1h-3zM476 288h3v1h-3zM482 288h3v1h-3zM488 288h3v1h-3zM494 288h3v1h-3zM500 288h3v1h-3zM506 288h3v1h-3zM512 288h3v1h-3zM518 288h3v1h-3zM524 288h3v1h-3zM530 288h3v1h-3zM536 288h3v1h-3zM542 288h3v1h-3zM548 288h3v1h-3zM554 288h3v1h-3zM560 288h3v1h-3zM566 288h3v1h-3zM572 288h3v1h-3zM578 288h3v1h-3zM584 288h3v1h-3zM590 288h3v1h-3zM596 288h3v1h-3zM602 288h3v1h-3zM608 288h3v1h-3zM614 288h3v1h-3zM620 288h3v1h-3zM626 288h3v1h-3zM632 288h3v1h-3zM638 288h3v1h-3zM644 288h3v1h-3zM650 288h3v1h-3zM656 288h3v1h-3zM662 288h3v1h-3zM668 288h3v1h-3zM674 288h3v1h-3z" fill="#778899"/>
<path d="M14 354h3v1h-3zM20 354h3v1h-3zM26 354h3v1h-3zM32 354h3v1h-3zM38 354h3v1h-3zM44 354h3v1h-3zM50 354h3v1h-3zM56 354h3v1h-3zM62 354h3v1h-3zM68 354h3v1h-3zM74 354h3v1h-3zM80 354h3v1h-3zM86 354h3v1h-3zM92 354h3v1h-3zM98 354h3v1h-3zM104 354h3v1h-3zM110 354h3v1h-3zM116 354h3v1h-3zM122 354h3v1h-3zM128 354h3v1h-3zM134 354h3v1h-3zM140 354h3v1h-3zM146 354h3v1h-3zM152 354h3v1h-3zM158 354h3v1h-3zM164 354h3v1h-3zM170 354h3v1h-3zM176 354h3v1h-3zM182 354h3v1h-3zM188 354h3v1h-3zM194 354h3v1h-3zM200 354h3v1h-3zM206 354h3v1h-3zM212 354h3v1h-3zM218 354h3v1h-3zM224 354h3v1h-3zM230 354h3v1h-3zM236 354h3v1h-3zM242 354h3v1h-3zM248 354h3v1h-3zM254 354h3v1h-3zM260 354h3v1h-3zM266 354h3v1h-3zM272 354h3v1h-3zM278 354h3v1h-3zM284 354h3v1h-3zM290 354h3v1h-3zM296 354h3v1h-3zM302 354h3v1h-3zM308 354h3v1h-3zM314 354h3v1h-3zM320 354h3v1h-3zM326 354h3v1h-3zM332 354h3v1h-3zM338 354h3v1h-3zM344 354h3v1h-3zM350 354h3v1h-3zM356 354h3v1h-3zM362 354h3v1h-3zM368 354h3v1h-3zM374 354h3v1h-3zM380 354h3v1h-3zM386 354h3v1h-3zM392 354h3v1h-3zM398 354h3v1h-3zM404 354h3v1h-3zM410 354h3v1h-3zM416 354h3v1h-3zM422 354h3v1h-3zM428 354h3v1h-3zM434 354h3v1h-3zM440 354h3v1h-3zM446 354h3v1h-3zM452 354h3v1h-3zM458 354h3v1h-3zM464 354h3v1h-3zM470 354h3v1h-3zM476 354h3v1h-3zM482 354h3v1h-3zM488 354h3v1h-3zM494 354h3v1h-3zM500 354h3v1h-3zM506 354h3v1h-3zM512 354h3v1h-3zM518 354h3v1h-3zM524 354h3v1h-3zM530 354h3v1h-3zM536 354h3v1h-3zM542 354h3v1h-3zM548 354h3v1h-3zM554 354h3v1h-3zM560 354h3v1h-3zM566 354h3v1h-3zM572 354h3v1h-3zM578 354h3v1h-3zM584 354h3v1h-3zM590 354h3v1h-3zM596 354h3v1h-3zM602 354h3v1h-3zM608 354h3v1h-3zM614 354h3v1h-3zM620 354h3v1h-3zM626 354h3v1h-3zM632 354h3v1h-3zM638 354h3v1h-3zM644 354h3v1h-3zM650 354h3v1h-3zM656 354h3v1h-3zM662 354h3v1h-3zM668 354h3v1h-3zM674 354h3v1h-3zM14 436h3v1h-3zM20 436h3v1h-3zM26 436h3v1h-3zM32 436h3v1h-3zM38 436h3v1h-3zM44 436h3v1h-3zM50 436h3v1h-3zM56 436h3v1h-3zM62 436h3v1h-3zM68 436h3v1h-3zM74 436h3v1h-3zM80 436h3v1h-3zM86 436h3v1h-3zM92 436h3v1h-3zM98 436h3v1h-3zM104 436h3v1h-3zM110 436h3v1h-3zM116 436h3v1h-3zM122 436h3v1h-3zM128 436h3v1h-3zM134 436h3v1h-3zM140 436h3v1h-3zM146 436h3v1h-3zM152 436h3v1h-3zM158 436h3v1h-3zM164 436h3v1h-3zM170 436h3v1h-3zM176 436h3v1h-3zM182 436h3v1h-3zM188 436h3v1h-3zM194 436h3v1h-3zM200 436h3v1h-3zM206 436h3v1h-3zM212 436h3v1h-3zM218 436h3v1h-3zM224 436h3v1h-3zM230 436h3v1h-3zM236 436h3v1h-3zM242 436h3v1h-3zM248 436h3v1h-3zM254 436h3v1h-3zM260 436h3v1h-3zM266 436h3v1h-3zM272 436h3v1h-3zM278 436h3v1h-3zM284 436h3v1h-3zM290 436h3v1h-3zM296 436h3v1h-3zM302 436h3v1h-3zM308 436h3v1h-3zM314 436h3v1h-3zM320 436h3v1h-3zM326 436h3v1h-3zM332 436h3v1h-3zM338 436h3v1h-3zM344 436h3v1h-3zM350 436h3v1h-3zM356 436h3v1h-3zM362 436h3v1h-3zM368 436h3v1h-3zM374 436h3v1h-3zM380 436h3v1h-3zM386 436h3v1h-3zM392 436h3v1h-3zM398 436h3v1h-3zM404 436h3v1h-3zM410 436h3v1h-3zM416 436h3v1h-3zM422 436h3v1h-3zM428 436h3v1h-3zM434 436h3v1h-3zM440 436h3v1h-3zM446 436h3v1h-3zM452 436h3v1h-3zM458 436h3v1h-3zM464 436h3v1h-3zM470 436h3v1h-3zM476 436h3v1h-3zM482 436h3v1h-3zM488 436h3v1h-3zM494 436h3v1h-3zM500 436h3v1h-3zM506 436h3v1h-3zM512 436h3v1h-3zM518 436h3v1h-3zM524 436h3v1h-3zM530 436h3v1h-3zM536 436h3v1h-3zM542 436h3v1h-3zM548 436h3v1h-3zM554 436h3v1h-3zM560 436h3v1h-3zM566 436h3v1h-3zM572 436h3v1h-3zM578 436h3v1h-3zM584 436h3v1h-3zM590 436h3v1h-3zM596 436h3v1h-3zM602 436h3v1h-3zM608 436h3v1h-3zM614 436h3v1h-3zM620 436h3v1h-3zM626 436h3v1h-3zM632 436h3v1h-3zM638 436h3v1h-3zM644 436h3v1h-3zM650 436h3v1h-3zM656 436h3v1h-3zM662 436h3v1h-3zM668 436h3v1h-3zM674 436h3v1h-3zM14 447h3v1h-3zM20 447h3v1h-3zM26 447h3v1h-3zM32 447h3v1h-3zM38 447h3v1h-3zM44 447h3v1h-3zM50 447h3v1h-3zM56 447h3v1h-3zM62 447h3v1h-3zM68 447h3v1h-3zM74 447h3v1h-3zM80 447h3v1h-3zM86 447h3v1h-3zM92 447h3v1h-3zM98 447h3v1h-3zM104 447h3v1h-3zM110 447h3v1h-3zM116 447h3v1h-3zM122 447h3v1h-3zM128 447h3v1h-3zM134 447h3v1h-3zM140 447h3v1h-3zM146 447h3v1h-3zM152 447h3v1h-3zM158 447h3v1h-3zM164 447h3v1h-3zM170 447h3v1h-3zM176 447h3v1h-3zM182 447h3v1h-3zM188 447h3v1h-3zM194 447h3v1h-3zM200 447h3v1h-3zM206 447h3v1h-3zM212 447h3v1h-3zM218 447h3v1h-3zM224 447h3v1h-3zM230 447h3v1h-3zM236 447h3v1h-3zM242 447h3v1h-3zM248 447h3v1h-3zM254 447h3v1h-3zM260 447h3v1h-3zM266 447h3v1h-3zM272 447h3v1h-3zM278 447h3v1h-3zM284 447h3v1h-3zM290 447h3v1h-3zM296 447h3v1h-3zM302 447h3v1h-3zM308 447h3v1h-3zM314 447h3v1h-3zM320 447h3v1h-3zM326 447h3v1h-3zM332 447h3v1h-3zM338 447h3v1h-3zM344 447h3v1h-3zM350 447h3v1h-3zM356 447h3v1h-3zM362 447h3v1h-3zM368 447h3v1h-3zM374 447h3v1h-3zM380 447h3v1h-3zM386 447h3v1h-3zM392 447h3v1h-3zM398 447h3v1h-3zM404 447h3v1h-3zM410 447h3v1h-3zM416 447h3v1h-3zM422 447h3v1h-3zM428 447h3v1h-3zM434 447h3v1h-3zM440 447h3v1h-3zM446 447h3v1h-3zM452 447h3v1h-3zM458 447h3v1h-3zM464 447h3v1h-3zM470 447h3v1h-3zM476 447h3v1h-3zM482 447h3v1h-3zM488 447h3v1h-3zM494 447h3v1h-3zM500 447h3v1h-3zM506 447h3v1h-3zM512 447h3v1h-3zM518 447h3v1h-3zM524 447h3v1h-3zM530 447h3v1h-3zM536 447h3v1h-3zM542 447h3v1h-3zM548 447h3v1h-3zM554 447h3v1h-3zM560 447h3v1h-3zM566 447h3v1h-3zM572 447h3v1h-3zM578 447h3v1h-3zM584 447h3v1h-3zM590 447h3v1h-3zM596 447h3v1h-3zM602 447h3v1h-3zM608 447h3v1h-3zM614 447h3v1h-3zM620 447h3v1h-3zM626 447h3v1h-3zM632 447h3v1h-3zM638 447h3v1h-3zM644 447h3v1h-3zM650 447h3v1h-3zM656 447h3v1h-3zM662 447h3v1h-3zM668 447h3v1h-3zM674 447h3v1h-3zM14 465h3v1h-3zM20 465h3v1h-3zM26 465h3v1h-3zM32 465h3v1h-3zM38 465h3v1h-3zM44 465h3v1h-3zM50 465h3v1h-3zM56 465h3v1h-3zM62 465h3v1h-3zM68 465h3v1h-3zM74 465h3v1h-3zM80 465h3v1h-3zM86 465h3v1h-3zM92 465h3v1h-3zM98 465h3v1h-3zM104 465h3v1h-3zM110 465h3v1h-3zM116 465h3v1h-3zM122 465h3v1h-3zM128 465h3v1h-3zM134 465h3v1h-3zM140 465h3v1h-3zM146 465h3v1h-3zM152 465h3v1h-3zM158 465h3v1h-3zM164 465h3v1h-3zM170 465h3v1h-3zM176 465h3v1h-3zM182 465h3v1h-3zM188 465h3v1h-3zM194 465h3v1h-3zM200 465h3v1h-3zM206 465h3v1h-3zM212 465h3v1h-3zM218 465h3v1h-3zM224 465h3v1h-3zM230 465h3v1h-3zM236 465h3v1h-3zM242 465h3v1h-3zM248 465h3v1h-3zM254 465h3v1h-3zM260 465h3v1h-3zM266 465h3v1h-3zM272 465h3v1h-3zM278 465h3v1h-3zM284 465h3v1h-3zM290 465h3v1h-3zM296 465h3v1h-3zM302 465h3v1h-3zM308 465h3v1h-3zM314 465h3v1h-3zM320 465h3v1h-3zM326 465h3v1h-3zM332 465h3v1h-3zM338 465h3v1h-3zM344 465h3v1h-3zM350 465h3v1h-3zM356 465h3v1h-3zM362 465h3v1h-3zM368 465h3v1h-3zM374 465h3v1h-3zM380 465h3v1h-3zM386 465h3v1h-3zM392 465h3v1h-3zM398 465h3v1h-3zM404 465h3v1h-3zM410 465h3v1h-3zM416 465h3v1h-3zM422 465h3v1h-3zM428 465h3v1h-3zM434 465h3v1h-3zM440 465h3v1h-3zM446 465h3v1h-3zM452 465h3v1h-3zM458 465h3v1h-3zM464 465h3v1h-3zM470 465h3v1h-3zM476 465h3v1h-3zM482 465h3v1h-3zM488 465h3v1h-3zM494 465h3v1h-3zM500 465h3v1h-3zM506 465h3v1h-3zM512 465h3v1h-3zM518 465h3v1h-3zM524 465h3v1h-3zM530 465h3v1h-3zM536 465h3v1h-3zM542 465h3v1h-3zM548 465h3v1h-3zM554 465h3v1h-3zM560 465h3v1h-3zM566 465h3v1h-3zM572 465h3v1h-3zM578 465h3v1h-3zM584 465h3v1h-3zM590 465h3v1h-3zM596 465h3v1h-3zM602 465h3v1h-3zM608 465h3v1h-3zM614 465h3v1h-3zM620 465h3v1h-3zM626 465h3v1h-3zM632 465h3v1h-3zM638 465h3v1h-3zM644 465h3v1h-3zM650 465h3v1h-3zM656 465h3v1h-3zM662 465h3v1h-3zM668 465h3v1h-3zM674 465h3v1h-3zM14 493h3v1h-3zM20 493h3v1h-3zM26 493h3v1h-3zM32 493h3v1h-3zM38 493h3v1h-3zM44 493h3v1h-3zM50 493h3v1h-3zM56 493h3v1h-3zM62 493h3v1h-3zM68 493h3v1h-3zM74 493h3v1h-3zM80 493h3v1h-3zM86 493h3v1h-3zM92 493h3v1h-3zM98 493h3v1h-3zM104 493h3v1h-3zM110 493h3v1h-3zM116 493h3v1h-3zM122 493h3v1h-3zM128 493h3v1h-3zM134 493h3v1h-3zM140 493h3v1h-3zM146 493h3v1h-3zM152 493h3v1h-3zM158 493h3v1h-3zM164 493h3v1h-3zM170 493h3v1h-3zM176 493h3v1h-3zM182 493h3v1h-3zM188 493h3v1h-3zM194 493h3v1h-3zM200 493h3v1h-3zM206 493h3v1h-3zM212 493h3v1h-3zM218 493h3v1h-3zM224 493h3v1h-3zM230 493h3v1h-3zM236 493h3v1h-3zM242 493h3v1h-3zM248 493h3v1h-3zM254 493h3v1h-3zM260 493h3v1h-3zM266 493h3v1h-3zM272 493h3v1h-3zM278 493h3v1h-3zM284 493h3v1h-3zM290 493h3v1h-3zM296 493h3v1h-3zM302 493h3v1h-3zM308 493h3v1h-3zM314 493h3v1h-3zM320 493h3v1h-3zM326 493h3v1h-3zM332 493h3v1h-3zM338 493h3v1h-3zM344 493h3v1h-3zM350 493h3v1h-3zM356 493h3v1h-3zM362 493h3v1h-3zM368 493h3v1h-3zM374 493h3v1h-3zM380 493h3v1h-3zM386 493h3v1h-3zM392 493h3v1h-3zM398 493h3v1h-3zM404 493h3v1h-3zM410 493h3v1h-3zM416 493h3v1h-3zM422 493h3v1h-3zM428 493h3v1h-3zM434 493h3v1h-3zM440 493h3v1h-3zM446 493h3v1h-3zM452 493h3v1h-3zM458 493h3v1h-3zM464 493h3v1h-3zM470 493h3v1h-3zM476 493h3v1h-3zM482 493h3v1h-3zM488 493h3v1h-3zM494 493h3v1h-3zM500 493h3v1h-3zM506 493h3v1h-3zM512 493h3v1h-3zM518 493h3v1h-3zM524 493h3v1h-3zM530 493h3v1h-3zM536 493h3v1h-3zM542 493h3v1h-3zM548 493h3v1h-3zM554 493h3v1h-3zM560 493h3v1h-3zM566 493h3v1h-3zM572 493h3v1h-3zM578 493h3v1h-3zM584 493h3v1h-3zM590 493h3v1h-3zM596 493h3v1h-3zM602 493h3v1h-3zM608 493h3v1h-3zM614 493h3v1h-3zM620 493h3v1h-3zM626 493h3v1h-3zM632 493h3v1h-3zM638 493h3v1h-3zM644 493h3v1h-3zM650 493h3v1h-3zM656 493h3v1h-3zM662 493h3v1h-3zM668 493h3v1h-3zM674 493h3v1h-3zM14 522h3v1h-3zM20 522h3v1h-3zM26 522h3v1h-3zM32 522h3v1h-3zM38 522h3v1h-3zM44 522h3v1h-3zM50 522h3v1h-3zM56 522h3v1h-3zM62 522h3v1h-3zM68 522h3v1h-3zM74 522h3v1h-3zM80 522h3v1h-3zM86 522h3v1h-3zM92 522h3v1h-3zM98 522h3v1h-3zM104 522h3v1h-3zM110 522h3v1h-3zM116 522h3v1h-3zM122 522h3v1h-3zM128 522h3v1h-3zM134 522h3v1h-3zM140 522h3v1h-3zM146 522h3v1h-3zM152 522h3v1h-3zM158 522h3v1h-3zM164 522h3v1h-3zM170 522h3v1h-3zM176 522h3v1h-3zM182 522h3v1h-3zM188 522h3v1h-3zM194 522h3v1h-3zM200 522h3v1h-3zM206 522h3v1h-3zM212 522h3v1h-3zM218 522h3v1h-3zM224 522h3v1h-3zM230 522h3v1h-3zM236 522h3v1h-3zM242 522h3v1h-3zM248 522h3v1h-3zM254 522h3v1h-3zM260 522h3v1h-3zM266 522h3v1h-3zM272 522h3v1h-3zM278 522h3v1h-3zM284 522h3v1h-3zM290 522h3v1h-3zM296 522h3v1h-3zM302 522h3v1h-3zM308 522h3v1h-3zM314 522h3v1h-3zM320 522h3v1h-3zM326 522h3v1h-3zM332 522h3v1h-3zM338 522h3v1h-3zM344 522h3v1h-3zM350 522h3v1h-3zM356 522h3v1h-3zM362 522h3v1h-3zM368 522h3v1h-3zM374 522h3v1h-3zM380 522h3v1h-3zM386 522h3v1h-3zM392 522h3v1h-3zM398 522h3v1h-3zM404 522h3v1h-3zM410 522h3v1h-3zM416 522h3v1h-3zM422 522h3v1h-3zM428 522h3v1h-3zM434 522h3v1h-3zM440 522h3v1h-3zM446 522h3v1h-3zM452 522h3v1h-3zM458 522h3v1h-3zM464 522h3v1h-3zM470 522h3v1h-3zM476 522h3v1h-3zM482 522h3v1h-3zM488 522h3v1h-3zM494 522h3v1h-3zM500 522h3v1h-3zM506 522h3v1h-3zM512 522h3v1h-3zM518 522h3v1h-3zM524 522h3v1h-3zM530 522h3v1h-3zM536 522h3v1h-3zM542 522h3v1h-3zM548 522h3v1h-3zM554 522h3v1h-3zM560 522h3v1h-3zM566 522h3v1h-3zM572 522h3v1h-3zM578 522h3v1h-3zM584 522h3v1h-3zM590 522h3v1h-3zM596 522h3v1h-3zM602 522h3v1h-3zM608 522h3v1h-3zM614 522h3v1h-3zM620 522h3v1h-3zM626 522h3v1h-3zM632 522h3v1h-3zM638 522h3v1h-3zM644 522h3v1h-3zM650 522h3v1h-3zM656 522h3v1h-3zM662 522h3v1h-3zM668 522h3v1h-3zM674 522h3v1h-3zM14 539h3v1h-3zM20 539h3v1h-3zM26 539h3v1h-3zM32 539h3v1h-3zM38 539h3v1h-3zM44 539h3v1h-3zM50 539h3v1h-3zM56 539h3v1h-3zM62 539h3v1h-3zM68 539h3v1h-3zM74 539h3v1h-3zM80 539h3v1h-3zM86 539h3v1h-3zM92 539h3v1h-3zM98 539h3v1h-3zM104 539h3v1h-3zM110 539h3v1h-3zM116 539h3v1h-3zM122 539h3v1h-3zM128 539h3v1h-3zM134 539h3v1h-3zM140 539h3v1h-3zM146 539h3v1h-3zM152 539h3v1h-3zM158 539h3v1h-3zM164 539h3v1h-3zM170 539h3v1h-3zM176 539h3v1h-3zM182 539h3v1h-3zM188 539h3v1h-3zM194 539h3v1h-3zM200 539h3v1h-3zM206 539h3v1h-3zM212 539h3v1h-3zM218 539h3v1h-3zM224 539h3v1h-3zM230 539h3v1h-3zM236 539h3v1h-3zM242 539h3v1h-3zM248 539h3v1h-3zM254 539h3v1h-3zM260 539h3v1h-3zM266 539h3v1h-3zM272 539h3v1h-3zM278 539h3v1h-3zM284 539h3v1h-3zM290 539h3v1h-3zM296 539h3v1h-3zM302 539h3v1h-3zM308 539h3v1h-3zM314 539h3v1h-3zM320 539h3v1h-3zM326 539h3v1h-3zM332 539h3v1h-3zM338 539h3v1h-3zM344 539h3v1h-3zM350 539h3v1h-3zM356 539h3v1h-3zM362 539h3v1h-3zM368 539h3v1h-3zM374 539h3v1h-3zM380 539h3v1h-3zM386 539h3v1h-3zM392 539h3v1h-3zM398 539h3v1h-3zM404 539h3v1h-3zM410 539h3v1h-3zM416 539h3v1h-3zM422 539h3v1h-3zM428 539h3v1h-3zM434 539h3v1h-3zM440 539h3v1h-3zM446 539h3v1h-3zM452 539h3v1h-3zM458 539h3v1h-3zM464 539h3v1h-3zM470 539h3v1h-3zM476 539h3v1h-3zM482 539h3v1h-3zM488 539h3v1h-3zM494 539h3v1h-3zM500 539h3v1h-3zM506 539h3v1h-3zM512 539h3v1h-3zM518 539h3v1h-3zM524 539h3v1h-3zM530 539h3v1h-3zM536 539h3v1h-3zM542 539h3v1h-3zM548 539h3v1h-3zM554 539h3v1h-3zM560 539h3v1h-3zM566 539h3v1h-3zM572 539h3v1h-3zM578 539h3v1h-3zM584 539h3v1h-3zM590 539h3v1h-3zM596 539h3v1h-3zM602 539h3v1h-3zM608 539h3v1h-3zM614 539h3v1h-3zM620 539h3v1h-3zM626 539h3v1h-3zM632 539h3v1h-3zM638 539h3v1h-3zM644 539h3v1h-3zM650 539h3v1h-3zM656 539h3v1h-3zM662 539h3v1h-3zM668 539h3v1h-3zM674 539h3v1h-3z" fill="#c0c0c0"/>
<path d="M12 33H681V292H12ZM13 34V291H680V34ZM12 293H681V422H12ZM13 294V421H680V294ZM12 423H681V552H12ZM13 424V551H680V424Z" fill="#ffffff" fill-rule="evenodd"/>
<path d="M681 57h2v1h-2zM681 90h2v1h-2zM681 123h2v1h-2zM681 156h2v1h-2zM681 189h2v1h-2zM681 222h2v1h-2zM681 255h2v1h-2zM681 288h2v1h-2zM681 295h1v1h-1zM681 420h1v1h-1zM681 425h1v1h-1zM681 550h1v1h-1zM13 552h1v3h-1zM77 552h1v3h-1zM141 552h1v3h-1zM205 552h1v3h-1zM269 552h1v3h-1zM333 552h1v3h-1zM397 552h1v3h-1zM461 552h1v3h-1zM525 552h1v3h-1zM589 552h1v3h-1zM653 552h1v3h-1z" fill="#ffffff"/>
<g clip-path="url(#cm)">
<path d="M13 154h1v32h-1zM11 172h5v2h-5zM21 156h1v26h-1zM19 167h5v6h-5zM29 161h1v47h-1zM27 167h5v29h-5zM37 176h1v41h-1zM35 184h5v12h-5zM45 129h1v64h-1zM43 139h5v46h-5zM53 144h1v33h-1zM51 160h5v13h-5zM61 149h1v32h-1zM59 168h5v5h-5zM69 165h1v21h-1zM67 168h5v6h-5zM77 105h1v75h-1zM75 111h5v63h-5zM85 85h1v31h-1zM83 104h5v8h-5zM93 93h1v18h-1zM91 102h5v6h-5zM101 102h1v23h-1zM99 102h5v11h-5zM109 85h1v35h-1zM107 90h5v23h-5zM117 59h1v60h-1zM115 91h5v15h-5zM125 74h1v44h-1zM123 85h5v21h-5zM133 69h1v34h-1zM131 82h5v4h-5zM141 71h1v32h-1zM139 75h5v8h-5zM149 75h1v62h-1zM147 75h5v58h-5zM157 118h1v48h-1zM155 131h5v20h-5zM165 135h1v23h-1zM163 143h5v8h-5zM173 103h1v58h-1zM171 122h5v18h-5zM181 117h1v49h-1zM179 122h5v7h-5zM189 127h1v26h-1zM187 128h5v20h-5zM197 142h1v34h-1zM195 148h5v22h-5zM205 153h1v34h-1zM203 164h5v6h-5zM213 136h1v43h-1zM211 155h5v5h-5zM221 133h1v24h-1zM219 144h5v13h-5zM229 130h1v34h-1zM227 144h5v13h-5zM237 137h1v55h-1zM235 156h5v24h-5zM245 174h1v29h-1zM243 179h5v10h-5zM253 165h1v27h-1zM251 169h5v21h-5zM261 135h1v37h-1zM259 142h5v28h-5zM269 110h1v41h-1zM267 114h5v29h-5zM277 92h1v32h-1zM275 99h5v16h-5zM285 89h1v22h-1zM283 99h5v1h-5zM293 110h1v27h-1zM291 119h5v12h-5zM301 124h1v22h-1zM299 130h5v5h-5zM309 116h1v23h-1zM307 133h5v1h-5zM317 109h1v27h-1zM315 133h5v2h-5zM325 129h1v9h-1zM323 134h5v4h-5zM333 126h1v22h-1zM331 134h5v12h-5zM341 128h1v21h-1zM339 138h5v8h-5zM349 114h1v27h-1zM347 132h5v7h-5zM357 119h1v26h-1zM355 125h5v8h-5zM365 117h1v11h-1zM363 124h5v2h-5zM373 102h1v32h-1zM371 116h5v3h-5zM381 102h1v37h-1zM379 116h5v19h-5zM389 103h1v50h-1zM387 108h5v27h-5zM397 97h1v14h-1zM395 107h5v2h-5zM405 101h1v34h-1zM403 107h5v1h-5zM413 99h1v11h-1zM411 100h5v6h-5zM421 67h1v39h-1zM419 79h5v26h-5zM429 73h1v17h-1zM427 78h5v10h-5zM437 47h1v78h-1zM435 87h5v35h-5zM445 119h1v49h-1zM443 121h5v41h-5zM453 152h1v14h-1zM451 161h5v3h-5zM461 154h1v41h-1zM459 161h5v27h-5zM469 174h1v17h-1zM467 182h5v6h-5zM477 173h1v42h-1zM475 182h5v3h-5zM485 176h1v21h-1zM483 184h5v9h-5zM493 172h1v22h-1zM491 185h5v9h-5zM501 182h1v18h-1zM499 185h5v4h-5zM509 178h1v43h-1zM507 188h5v8h-5zM517 195h1v21h-1zM515 195h5v16h-5zM525 210h1v21h-1zM523 210h5v15h-5zM533 211h1v21h-1zM531 215h5v12h-5zM541 204h1v28h-1zM539 215h5v7h-5zM549 219h1v25h-1zM547 221h5v22h-5zM557 225h1v21h-1zM555 237h5v6h-5zM565 213h1v26h-1zM563 221h5v17h-5zM573 220h1v24h-1zM571 220h5v20h-5zM581 214h1v31h-1zM579 224h5v16h-5zM589 218h1v22h-1zM587 224h5v15h-5zM597 204h1v81h-1zM595 208h5v31h-5zM605 200h1v28h-1zM603 208h5v10h-5zM613 204h1v43h-1zM611 217h5v24h-5zM621 236h1v35h-1zM619 240h5v24h-5zM629 258h1v18h-1zM627 263h5v9h-5zM637 251h1v30h-1zM635 261h5v11h-5zM645 247h1v30h-1zM643 261h5v7h-5zM653 247h1v33h-1zM651 250h5v17h-5zM661 244h1v25h-1zM659 250h5v14h-5zM669 238h1v28h-1zM667 240h5v24h-5zM677 216h1v30h-1zM675 233h5v8h-5z" fill="#00ff00"/>
<path d="M20 168h3v4h-3zM36 185h3v10h-3zM44 140h3v44h-3zM60 169h3v3h-3zM76 112h3v61h-3zM84 105h3v6h-3zM92 103h3v4h-3zM108 91h3v21h-3zM124 86h3v19h-3zM132 83h3v2h-3zM140 76h3v6h-3zM164 144h3v6h-3zM172 123h3v16h-3zM204 165h3v4h-3zM212 156h3v3h-3zM220 145h3v11h-3zM252 170h3v19h-3zM260 143h3v26h-3zM268 115h3v27h-3zM276 100h3v14h-3zM340 139h3v6h-3zM348 133h3v5h-3zM356 126h3v6h-3zM372 117h3v1h-3zM388 109h3v25h-3zM420 80h3v24h-3zM452 162h3v1h-3zM468 183h3v4h-3zM492 186h3v7h-3zM532 216h3v10h-3zM556 238h3v4h-3zM564 222h3v15h-3zM580 225h3v14h-3zM596 209h3v29h-3zM636 262h3v9h-3zM652 251h3v15h-3zM668 241h3v22h-3zM676 234h3v6h-3z" fill="#000"/>
<path d="M28 168h3v27h-3zM52 161h3v11h-3zM68 169h3v4h-3zM100 103h3v9h-3zM116 92h3v13h-3zM148 76h3v56h-3zM156 132h3v18h-3zM180 123h3v5h-3zM188 129h3v18h-3zM196 149h3v20h-3zM228 145h3v11h-3zM236 157h3v22h-3zM244 180h3v8h-3zM292 120h3v10h-3zM300 131h3v3h-3zM324 135h3v2h-3zM332 135h3v10h-3zM380 117h3v17h-3zM412 101h3v4h-3zM428 79h3v8h-3zM436 88h3v33h-3zM444 122h3v39h-3zM460 162h3v25h-3zM476 183h3v1h-3zM484 185h3v7h-3zM500 186h3v2h-3zM508 189h3v6h-3zM516 196h3v14h-3zM524 211h3v13h-3zM540 216h3v5h-3zM548 222h3v20h-3zM572 221h3v18h-3zM588 225h3v13h-3zM604 209h3v8h-3zM612 218h3v22h-3zM620 241h3v22h-3zM628 264h3v7h-3zM644 262h3v5h-3zM660 251h3v12h-3z" fill="#fff"/>
</g>
<g shape-rendering="geometricPrecision">
<path d="M453.5 127V146.5M444 136L453.5 146.8L463 135.5" fill="none" stroke="#d3d3d3" stroke-width="2.5" stroke-linejoin="miter"/>
<polygon points="445.00,100.10 443.35,104.56 438.78,103.80 441.70,107.50 438.78,111.20 443.35,110.44 445.00,114.90 446.65,110.44 451.22,111.20 448.30,107.50 451.22,103.80 446.65,104.56" fill="#d3d3d3"/>
</g>
<g clip-path="url(#c2)"><polyline points="13.5,307.0 21.5,308.0 29.5,333.3 37.5,338.3 45.5,320.8 53.5,333.3 61.5,322.0 69.5,342.8 77.5,317.8 85.5,317.8 93.5,328.0 101.5,328.0 109.5,315.0 117.5,325.0 125.5,315.5 133.5,315.5 141.5,301.0 149.5,329.5 157.5,358.4 165.5,341.0 173.5,334.0 181.5,334.0 189.5,370.2 197.5,383.0 205.5,381.8 213.5,374.0 221.5,377.6 229.5,377.6 237.5,395.9 245.5,401.0 253.5,395.2 261.5,357.0 269.5,338.2 277.5,334.4 285.5,345.0 293.5,354.8 301.5,347.2 309.5,338.5 317.5,341.2 325.5,346.3 333.5,353.4 341.5,346.3 349.5,334.4 357.5,326.6 365.5,334.4 373.5,343.4 381.5,363.0 389.5,358.4 397.5,357.9 405.5,344.5 413.5,341.6 421.5,331.1 429.5,333.3 437.5,346.7 445.5,362.4 453.5,365.0 461.5,378.7 469.5,379.1 477.5,381.4 485.5,388.0 493.5,377.3 501.5,389.9 509.5,394.3 517.5,400.4 525.5,406.6 533.5,414.4 541.5,413.3 549.5,408.2 557.5,388.5 565.5,381.9 573.5,378.7 581.5,374.0 589.5,378.0 597.5,361.9 605.5,369.1 613.5,378.0 621.5,384.7 629.5,381.4 637.5,371.8 645.5,378.0 653.5,367.5 661.5,364.6 669.5,356.8 677.5,359.7" fill="none" stroke="#1e90ff" stroke-width="2" stroke-linejoin="round" shape-rendering="crispEdges"/></g>
<g clip-path="url(#c3)"><polyline points="13.5,458.9 21.5,458.2 29.5,458.2 37.5,457.8 45.5,451.5 53.5,447.7 61.5,446.4 69.5,444.8 77.5,443.0 85.5,442.6 93.5,442.6 101.5,442.6 109.5,442.6 117.5,442.6 125.5,442.6 133.5,442.6 141.5,442.6 149.5,444.8 157.5,446.8 165.5,450.0 173.5,453.1 181.5,456.0 189.5,458.2 197.5,464.9 205.5,470.5 213.5,476.1 221.5,481.7 229.5,488.4 237.5,500.7 245.5,513.0 253.5,516.3 261.5,521.9 269.5,526.4 277.5,526.8 285.5,519.7 293.5,517.0 301.5,514.5 309.5,511.4 317.5,506.5 325.5,501.3 333.5,496.6 341.5,489.5 349.5,480.6 357.5,472.7 365.5,471.6 373.5,471.2 381.5,464.5 389.5,457.8 397.5,456.4 405.5,457.5 413.5,457.8 421.5,457.8 429.5,456.7 437.5,458.9 445.5,471.6 453.5,482.5 461.5,495.0 469.5,502.0 477.5,507.7 485.5,509.9 493.5,511.0 501.5,515.5 509.5,520.6 517.5,526.0 525.5,530.0 533.5,533.8 541.5,536.7 549.5,540.0 557.5,543.0 565.5,544.5 573.5,546.3 581.5,547.4 589.5,547.9 597.5,546.8 605.5,545.4 613.5,545.0 621.5,545.0 629.5,545.0 637.5,544.5 645.5,543.9 653.5,543.4 661.5,543.4 669.5,542.3 677.5,540.0" fill="none" stroke="#00ffff" stroke-width="2" stroke-linejoin="round" shape-rendering="crispEdges"/><polyline points="13.5,507.4 21.5,502.4 29.5,497.8 37.5,493.5 45.5,486.1 53.5,481.0 61.5,478.8 69.5,476.5 77.5,473.4 85.5,471.0 93.5,468.3 101.5,465.6 109.5,460.4 117.5,455.5 125.5,450.8 133.5,448.8 141.5,448.2 149.5,447.5 157.5,446.4 165.5,445.9 173.5,445.5 181.5,444.8 189.5,444.1 197.5,444.1 205.5,444.8 213.5,445.0 221.5,445.9 229.5,446.4 237.5,448.8 245.5,451.5 253.5,452.6 261.5,452.9 269.5,453.1 277.5,453.1 285.5,453.3 293.5,454.9 301.5,456.7 309.5,457.8 317.5,459.0 325.5,460.4 333.5,462.2 341.5,464.2 349.5,466.0 357.5,468.3 365.5,470.0 373.5,471.6 381.5,473.4 389.5,474.5 397.5,475.6 405.5,476.1 413.5,476.1 421.5,476.1 429.5,476.1 437.5,477.9 445.5,482.8 453.5,487.6 461.5,492.1 469.5,497.6 477.5,503.2 485.5,509.4 493.5,510.6 501.5,511.0 509.5,512.6 517.5,513.7 525.5,514.4 533.5,514.8 541.5,514.8 549.5,514.8 557.5,515.0 565.5,517.3 573.5,520.4 581.5,522.2 589.5,524.2 597.5,525.1 605.5,527.1 613.5,528.9 621.5,532.9 629.5,534.5 637.5,535.6 645.5,537.4 653.5,539.4 661.5,541.2 669.5,542.3 677.5,542.7" fill="none" stroke="#ffff00" stroke-width="2" stroke-linejoin="round" shape-rendering="crispEdges"/></g>
<path d="M13 546L18 551H13Z" fill="#778899"/>
<path d="M16 40h7v1h-1v1h-1v1h-1v1h-1v-1h-1v-1h-1v-1h-1z" fill="#fff"/>
</svg>
<div class="l" style="left:686.7px;top:51.7px;letter-spacing:0;">1.39720</div>
<div class="l" style="left:686.7px;top:84.7px;letter-spacing:0;">1.39040</div>
<div class="l" style="left:686.7px;top:117.7px;letter-spacing:0;">1.38360</div>
<div class="l" style="left:686.7px;top:150.7px;letter-spacing:0;">1.37680</div>
<div class="l" style="left:686.7px;top:183.7px;letter-spacing:0;">1.37000</div>
<div class="l" style="left:686.7px;top:216.7px;letter-spacing:0;">1.36320</div>
<div class="l" style="left:686.7px;top:249.7px;letter-spacing:0;">1.35640</div>
<div class="l" style="left:686.7px;top:282.7px;letter-spacing:0;">1.34960</div>
<div class="l" style="left:684.4px;top:294.7px;letter-spacing:0;">102.0002</div>
<div class="l" style="left:684px;top:348.7px;letter-spacing:0;">100</div>
<div class="l" style="left:684.4px;top:408.7px;letter-spacing:0;">97.7805</div>
<div class="l" style="left:683.4px;top:424.7px;letter-spacing:0;">120</div>
<div class="l" style="left:683.4px;top:430.7px;letter-spacing:0;">100</div>
<div class="l" style="left:683.4px;top:441.7px;letter-spacing:0;">80</div>
<div class="l" style="left:683.4px;top:459.7px;letter-spacing:0;">50</div>
<div class="l" style="left:683.4px;top:487.7px;letter-spacing:0;">0.00</div>
<div class="l" style="left:683.4px;top:516.7px;letter-spacing:0;">-50</div>
<div class="l" style="left:683.4px;top:533.7px;letter-spacing:0;">-80</div>
<div class="l" style="left:683.4px;top:538.7px;letter-spacing:0;">-100</div>
<div class="l" style="left:12px;top:555px;letter-spacing:.2px;">24 Feb 2014</div>
<div class="l" style="left:76px;top:555px;letter-spacing:.2px;">6 Mar 2014</div>
<div class="l" style="left:140px;top:555px;letter-spacing:.2px;">18 Mar 2014</div>
<div class="l" style="left:204px;top:555px;letter-spacing:.2px;">28 Mar 2014</div>
<div class="l" style="left:268px;top:555px;letter-spacing:.2px;">9 Apr 2014</div>
<div class="l" style="left:332px;top:555px;letter-spacing:.2px;">21 Apr 2014</div>
<div class="l" style="left:396px;top:555px;letter-spacing:.2px;">1 May 2014</div>
<div class="l" style="left:460px;top:555px;letter-spacing:.2px;">13 May 2014</div>
<div class="l" style="left:524px;top:555px;letter-spacing:.2px;">23 May 2014</div>
<div class="l" style="left:588px;top:555px;letter-spacing:.2px;">4 Jun 2014</div>
<div class="l" style="left:652px;top:555px;letter-spacing:.2px;">16 Jun 2014</div>
<div class="l" style="left:28px;top:37px;letter-spacing:.38px;">EURUSD,Daily</div>
<div class="l" style="left:97.4px;top:37px;letter-spacing:.17px;">0.96718 0.97086 0.95520 0.96436</div>
<div class="l" style="left:17px;top:296px;letter-spacing:.22px;">Momentum(14) 97.3806</div>
<div class="l" style="left:17px;top:427.3px;letter-spacing:.11px;">R1(26) -15.4&nbsp; R1(52) -76.4</div>
</div>
</body></html>
